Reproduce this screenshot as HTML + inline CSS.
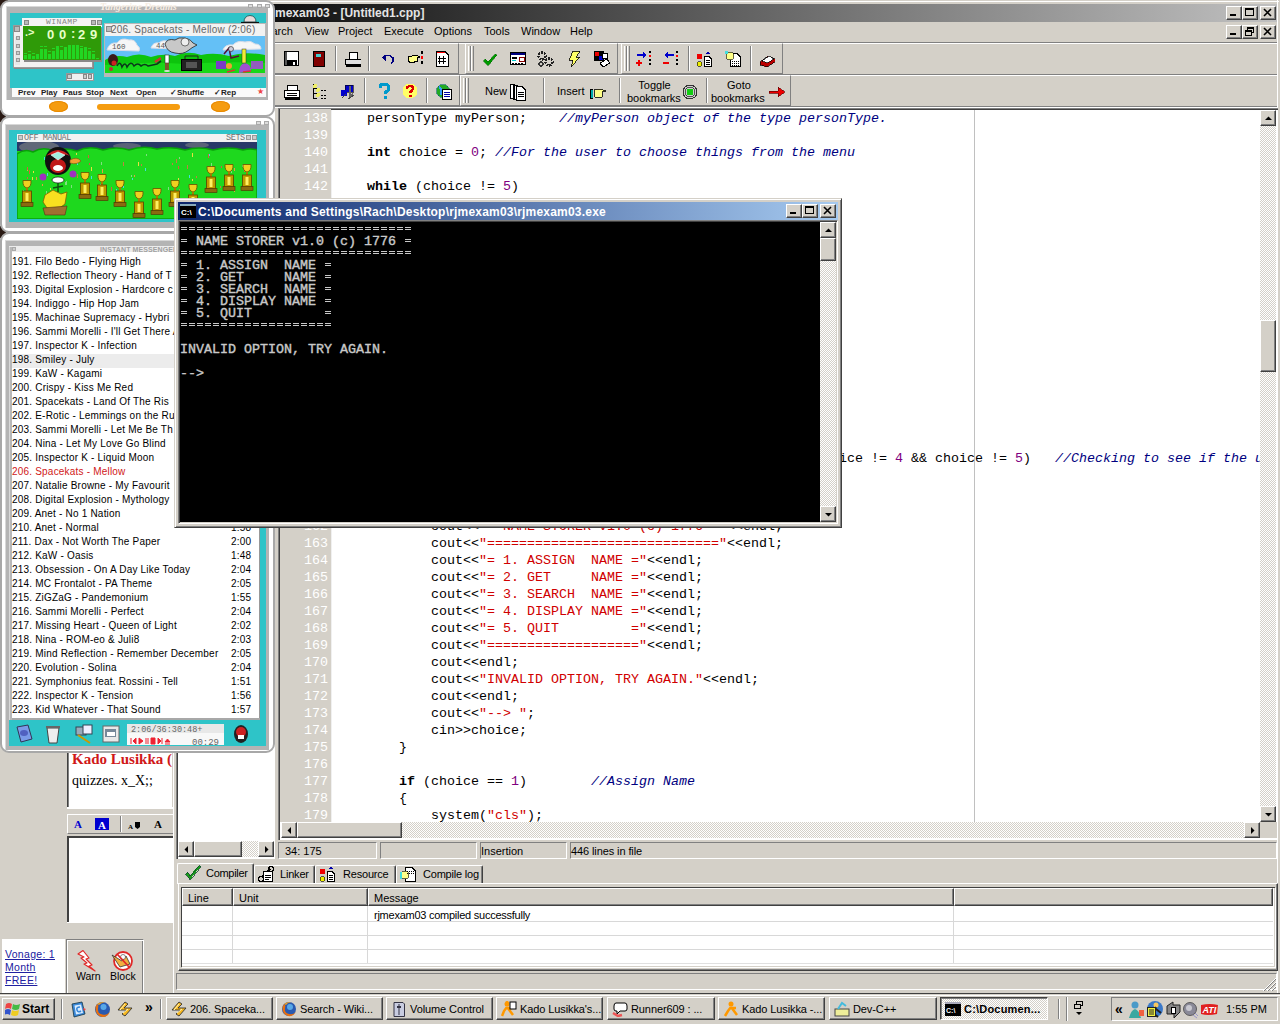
<!DOCTYPE html>
<html><head><meta charset="utf-8">
<style>
*{margin:0;padding:0;box-sizing:border-box}
html,body{width:1280px;height:1024px;overflow:hidden;background:#d4d0c8;font-family:"Liberation Sans",sans-serif;font-size:11px;color:#000;position:relative}
.a{position:absolute}
.t{white-space:pre;line-height:1}
.mono{font-family:"Liberation Mono",monospace}
svg{display:block}
</style></head><body>
<div class="a " style="left:0px;top:740px;width:176px;height:255px;background:#d4d0c8"></div>
<div class="a " style="left:67px;top:745px;width:106px;height:63px;background:#fff;border-left:1px solid #404040;border-top:1px solid #404040;box-shadow:inset 1px 0 0 #808080;"></div>
<div class="a " style="left:172px;top:745px;width:1px;height:63px;background:#d4d0c8"></div>
<div class="a t" style="left:72px;top:752px;font-family:'Liberation Serif',serif;font-weight:bold;font-size:15px;color:#d01818;width:100px;overflow:hidden;">Kado Lusikka (</div>
<div class="a t" style="left:72px;top:774px;font-family:'Liberation Serif',serif;font-size:14px;">quizzes. x_X;;</div>
<div class="a " style="left:67px;top:807px;width:106px;height:2px;background:#fff"></div>
<div class="a " style="left:67px;top:814px;width:106px;height:20px;background:#d4d0c8;border-top:1px solid #fff;border-left:1px solid #fff;border-bottom:1px solid #808080;"></div>
<div class="a " style="left:120px;top:816px;width:2px;height:16px;border-left:1px solid #808080;border-right:1px solid #fff;"></div>
<svg class="a" style="left:70px;top:816px" width="100" height="16" viewBox="0 0 100 16">
<text x="4" y="12" font-family="Liberation Serif" font-weight="bold" font-size="11" fill="#0000d0">A</text>
<rect x="25" y="2" width="14" height="12" fill="#0000d0"/><text x="28" y="12.5" font-family="Liberation Serif" font-weight="bold" font-size="11" fill="#fff">A</text>
<text x="58" y="13" font-family="Liberation Serif" font-weight="bold" font-size="7" fill="#000">A</text><path d="M65 6 H70 V11 L67.5 13 L65 11Z" fill="#000"/>
<text x="84" y="12" font-family="Liberation Serif" font-weight="bold" font-size="11" fill="#000">A</text>
</svg>
<div class="a " style="left:67px;top:836px;width:106px;height:87px;background:#fff;border-left:2px solid #404040;border-top:2px solid #404040;"></div>
<div class="a " style="left:67px;top:922px;width:106px;height:1px;background:#fff"></div>
<div class="a " style="left:2px;top:939px;width:63px;height:56px;background:#fff"></div>
<div class="a t" style="left:5px;top:949px;font-size:10.5px;color:#2020a0;text-decoration:underline;letter-spacing:0.3px;">Vonage: 1</div>
<div class="a t" style="left:5px;top:962px;font-size:10.5px;color:#2020a0;text-decoration:underline;letter-spacing:0.3px;">Month</div>
<div class="a t" style="left:5px;top:975px;font-size:10.5px;color:#2020a0;text-decoration:underline;letter-spacing:0.3px;">FREE!</div>
<div class="a " style="left:66px;top:939px;width:78px;height:56px;background:#d4d0c8;border-left:1px solid #808080;border-top:1px solid #808080;border-right:1px solid #fff;box-shadow:inset 1px 1px 0 #fff,inset -1px 0 0 #808080;"></div>
<svg class="a" style="left:76px;top:950px" width="62" height="22" viewBox="0 0 62 22">
<path d="M2 4 L7 0.5 L13 8 L10 9 L16 15 L13 16 L19 21 L8 14 L11 13 L5 8 L8 7Z" fill="#fff" stroke="#e02828" stroke-width="1.2" stroke-linejoin="round"/>
<circle cx="47" cy="11" r="9" fill="#fff" stroke="#e02828" stroke-width="1.8"/>
<path d="M36 5 L46 11 L50 6 L54 14 L44 17 Z" fill="#f0b040" stroke="#333" stroke-width="0.8"/><circle cx="47" cy="7" r="2.5" fill="#fff" stroke="#333" stroke-width="0.6"/>
<path d="M41 4 L54 18" stroke="#e02828" stroke-width="1.8"/>
</svg>
<div class="a t" style="left:76px;top:971px;font-size:10.5px;">Warn</div>
<div class="a t" style="left:110px;top:971px;font-size:10.5px;">Block</div>
<div class="a " style="left:173px;top:0px;width:1107px;height:994px;background:#d4d0c8;"></div>
<div class="a " style="left:174px;top:1px;width:1105px;height:1px;background:#fff"></div>
<div class="a " style="left:180px;top:4px;width:1097px;height:18px;background:linear-gradient(to right,#000 0px,#c0c0c0 1096px);"></div>
<div class="a t" style="left:215px;top:7px;font-weight:bold;color:#e4e4e4;font-size:12px;">Dev-C++ rjmexam03 - [Untitled1.cpp]</div>
<div class="a " style="left:1226px;top:6px;width:16px;height:14px;background:#d4d0c8;border-top:1px solid #fff;border-left:1px solid #fff;border-right:1px solid #404040;border-bottom:1px solid #404040;box-shadow:inset -1px -1px 0 #808080;"><svg class="a" style="left:0;top:0" width="14" height="12"><rect x="3" y="7" width="6" height="2" fill="#000"/></svg></div>
<div class="a " style="left:1242px;top:6px;width:16px;height:14px;background:#d4d0c8;border-top:1px solid #fff;border-left:1px solid #fff;border-right:1px solid #404040;border-bottom:1px solid #404040;box-shadow:inset -1px -1px 0 #808080;"><svg class="a" style="left:0;top:0" width="14" height="12"><rect x="2.5" y="1.5" width="8" height="7" fill="none" stroke="#000"/><rect x="2" y="1" width="9" height="2" fill="#000"/></svg></div>
<div class="a " style="left:1260px;top:6px;width:16px;height:14px;background:#d4d0c8;border-top:1px solid #fff;border-left:1px solid #fff;border-right:1px solid #404040;border-bottom:1px solid #404040;box-shadow:inset -1px -1px 0 #808080;"><svg class="a" style="left:0;top:0" width="14" height="12"><path d="M3 2 L10 9 M10 2 L3 9" stroke="#000" stroke-width="1.6"/></svg></div>
<div class="a t" style="left:190px;top:26px;font-size:11px;">File</div>
<div class="a t" style="left:222px;top:26px;font-size:11px;">Edit</div>
<div class="a t" style="left:258px;top:26px;font-size:11px;">Search</div>
<div class="a t" style="left:305px;top:26px;font-size:11px;">View</div>
<div class="a t" style="left:338px;top:26px;font-size:11px;">Project</div>
<div class="a t" style="left:384px;top:26px;font-size:11px;">Execute</div>
<div class="a t" style="left:434px;top:26px;font-size:11px;">Options</div>
<div class="a t" style="left:484px;top:26px;font-size:11px;">Tools</div>
<div class="a t" style="left:521px;top:26px;font-size:11px;">Window</div>
<div class="a t" style="left:570px;top:26px;font-size:11px;">Help</div>
<div class="a " style="left:1226px;top:25px;width:16px;height:14px;background:#d4d0c8;border-top:1px solid #fff;border-left:1px solid #fff;border-right:1px solid #404040;border-bottom:1px solid #404040;box-shadow:inset -1px -1px 0 #808080;"><svg class="a" style="left:0;top:0" width="14" height="12"><rect x="3" y="7" width="6" height="2" fill="#000"/></svg></div>
<div class="a " style="left:1242px;top:25px;width:16px;height:14px;background:#d4d0c8;border-top:1px solid #fff;border-left:1px solid #fff;border-right:1px solid #404040;border-bottom:1px solid #404040;box-shadow:inset -1px -1px 0 #808080;"><svg class="a" style="left:0;top:0" width="14" height="12"><rect x="4.5" y="1.5" width="6" height="5" fill="none" stroke="#000"/><rect x="4" y="1" width="7" height="2" fill="#000"/><rect x="2.5" y="4.5" width="6" height="5" fill="#d4d0c8" stroke="#000"/><rect x="2" y="4" width="7" height="2" fill="#000"/></svg></div>
<div class="a " style="left:1260px;top:25px;width:16px;height:14px;background:#d4d0c8;border-top:1px solid #fff;border-left:1px solid #fff;border-right:1px solid #404040;border-bottom:1px solid #404040;box-shadow:inset -1px -1px 0 #808080;"><svg class="a" style="left:0;top:0" width="14" height="12"><path d="M3 2 L10 9 M10 2 L3 9" stroke="#000" stroke-width="1.6"/></svg></div>
<div class="a " style="left:1277px;top:0px;width:1px;height:996px;background:#fff"></div>
<div class="a " style="left:176px;top:42px;width:1101px;height:1px;background:#808080"></div>
<div class="a " style="left:176px;top:43px;width:1101px;height:1px;background:#fff"></div>
<div class="a " style="left:176px;top:74px;width:1101px;height:1px;background:#808080"></div>
<div class="a " style="left:176px;top:75px;width:1101px;height:1px;background:#fff"></div>
<div class="a " style="left:176px;top:106px;width:1101px;height:1px;background:#808080"></div>
<div class="a " style="left:176px;top:107px;width:1101px;height:1px;background:#fff"></div>
<div class="a " style="left:180px;top:43px;width:279px;height:31px;border-left:1px solid #fff;border-top:1px solid #fff;border-right:1px solid #808080;border-bottom:1px solid #808080;"></div>
<div class="a " style="left:183px;top:46px;width:3px;height:25px;border-left:1px solid #fff;border-right:1px solid #808080;"></div>
<div class="a " style="left:186px;top:46px;width:3px;height:25px;border-left:1px solid #fff;border-right:1px solid #808080;"></div>
<div class="a " style="left:335px;top:46px;width:2px;height:25px;border-left:1px solid #808080;border-right:1px solid #fff;"></div>
<div class="a " style="left:368px;top:46px;width:2px;height:25px;border-left:1px solid #808080;border-right:1px solid #fff;"></div>
<svg class="a" style="left:284px;top:51px" width="16" height="16" viewBox="0 0 16 16" shape-rendering="crispEdges"><rect x="0.5" y="0.5" width="14" height="14" fill="#fff" stroke="#000"/><rect x="2" y="9" width="11" height="6" fill="#000"/><rect x="3" y="1" width="9" height="6" fill="#fff"/><rect x="9" y="11" width="2" height="3" fill="#fff"/><rect x="1" y="1" width="2" height="13" fill="#555"/></svg>
<svg class="a" style="left:313px;top:51px" width="16" height="16" viewBox="0 0 16 16" shape-rendering="crispEdges"><rect x="0" y="0" width="11" height="15" fill="#800000" stroke="#000"/><rect x="3" y="3" width="5" height="3" fill="#4cc"/></svg>
<svg class="a" style="left:345px;top:52px" width="16" height="16" viewBox="0 0 16 16" shape-rendering="crispEdges"><rect x="4" y="0.5" width="8" height="7" fill="#fff" stroke="#000"/><rect x="0.5" y="7.5" width="16" height="5" fill="#e0e0e0" stroke="#000"/><rect x="1" y="13" width="15" height="2" fill="#000"/></svg>
<svg class="a" style="left:380px;top:54px" width="16" height="12" viewBox="0 0 16 12" shape-rendering="crispEdges"><path d="M3 3 Q9 -1 13 4 Q14 8 11 9" fill="none" stroke="#000080" stroke-width="1.5"/><path d="M1 3 L6 8 L6 2Z" fill="#000080"/></svg>
<svg class="a" style="left:407px;top:51px" width="16" height="16" viewBox="0 0 16 16" shape-rendering="crispEdges"><path d="M1 6 L9 4 L13 6 L10 7 L11 10 L4 12 L1 10Z" fill="#ff8" stroke="#000"/><rect x="14" y="0" width="2" height="3" fill="#000"/><rect x="14" y="5" width="2" height="3" fill="#f00"/><rect x="14" y="10" width="2" height="3" fill="#000"/></svg>
<svg class="a" style="left:436px;top:51px" width="13" height="16" viewBox="0 0 13 16" shape-rendering="crispEdges"><path d="M0.5 0.5 L9 0.5 L12.5 4 L12.5 15.5 L0.5 15.5Z" fill="#fff" stroke="#000"/><path d="M1 1.5 L9 1.5" stroke="#f00"/><path d="M4 5 L3 13 M8 5 L7 13 M2 7.5 L10 7.5 M2 10.5 L10 10.5" stroke="#000"/></svg>
<div class="a " style="left:465px;top:43px;width:153px;height:31px;border-left:1px solid #fff;border-top:1px solid #fff;border-right:1px solid #808080;border-bottom:1px solid #808080;"></div>
<div class="a " style="left:468px;top:46px;width:3px;height:25px;border-left:1px solid #fff;border-right:1px solid #808080;"></div>
<div class="a " style="left:471px;top:46px;width:3px;height:25px;border-left:1px solid #fff;border-right:1px solid #808080;"></div>
<svg class="a" style="left:482px;top:53px" width="16" height="16" viewBox="0 0 16 16" shape-rendering="crispEdges"><path d="M1 8 L6 13 L15 2 L13 1 L6 9 L3 6Z" fill="#090" stroke="#060" stroke-width="0.5"/></svg>
<svg class="a" style="left:510px;top:52px" width="16" height="14" viewBox="0 0 16 14" shape-rendering="crispEdges"><rect x="0.5" y="0.5" width="15" height="12" fill="#fff" stroke="#000"/><rect x="1" y="1" width="14" height="2" fill="#000080"/><rect x="2" y="5" width="5" height="2" fill="#000"/><rect x="2" y="8" width="4" height="1" fill="#0cc"/><rect x="9" y="5" width="5" height="4" fill="none" stroke="#800"/><path d="M2 11 H14" stroke="#000" stroke-dasharray="2 1"/></svg>
<svg class="a" style="left:537px;top:51px" width="17" height="16" viewBox="0 0 17 16" shape-rendering="crispEdges"><circle cx="5" cy="5" r="3.5" fill="none" stroke="#222" stroke-width="2.2" stroke-dasharray="2 1"/><circle cx="12" cy="11" r="3.5" fill="none" stroke="#222" stroke-width="2.2" stroke-dasharray="2 1"/><circle cx="4" cy="13" r="2" fill="none" stroke="#333" stroke-width="1.5"/></svg>
<svg class="a" style="left:567px;top:51px" width="14" height="16" viewBox="0 0 14 16" shape-rendering="crispEdges"><path d="M6 0 L13 0 L9 6 L13 6 L4 16 L6 9 L2 9Z" fill="#ff6" stroke="#000" stroke-width="0.8"/></svg>
<svg class="a" style="left:594px;top:51px" width="16" height="16" viewBox="0 0 16 16" shape-rendering="crispEdges"><rect x="0" y="0" width="10" height="10" fill="#000"/><rect x="1" y="1" width="4" height="4" fill="#e00"/><rect x="5" y="5" width="4" height="4" fill="#00c"/><circle cx="11" cy="5" r="3" fill="#fff" stroke="#000"/><path d="M6 12 L13 8 L16 12 L9 16Z" fill="#fff" stroke="#000"/></svg>
<div class="a " style="left:621px;top:43px;width:162px;height:31px;border-left:1px solid #fff;border-top:1px solid #fff;border-right:1px solid #808080;border-bottom:1px solid #808080;"></div>
<div class="a " style="left:624px;top:46px;width:3px;height:25px;border-left:1px solid #fff;border-right:1px solid #808080;"></div>
<div class="a " style="left:627px;top:46px;width:3px;height:25px;border-left:1px solid #fff;border-right:1px solid #808080;"></div>
<svg class="a" style="left:636px;top:51px" width="16" height="16" viewBox="0 0 16 16" shape-rendering="crispEdges"><path d="M1 4 H9" stroke="#00c" stroke-width="2"/><path d="M7 1 L11 4 L7 7Z" fill="#00c"/><path d="M3 9 V15 M0 12 H6" stroke="#e00" stroke-width="2"/><rect x="13" y="0" width="2" height="2" fill="#000"/><rect x="13" y="4" width="2" height="2" fill="#f00"/><rect x="13" y="8" width="2" height="2" fill="#000"/><rect x="13" y="12" width="2" height="2" fill="#000"/></svg>
<svg class="a" style="left:663px;top:51px" width="16" height="16" viewBox="0 0 16 16" shape-rendering="crispEdges"><path d="M3 4 H11" stroke="#00c" stroke-width="2"/><path d="M5 1 L1 4 L5 7Z" fill="#00c"/><path d="M0 12 H6" stroke="#e00" stroke-width="2"/><rect x="13" y="0" width="2" height="2" fill="#000"/><rect x="13" y="4" width="2" height="2" fill="#f00"/><rect x="13" y="8" width="2" height="2" fill="#000"/><rect x="13" y="12" width="2" height="2" fill="#000"/></svg>
<div class="a " style="left:688px;top:46px;width:2px;height:25px;border-left:1px solid #808080;border-right:1px solid #fff;"></div>
<svg class="a" style="left:697px;top:51px" width="16" height="16" viewBox="0 0 16 16" shape-rendering="crispEdges"><rect x="0" y="3" width="5" height="5" fill="#e00"/><circle cx="2.5" cy="13" r="2.5" fill="#ee0" stroke="#000" stroke-width="0.6"/><path d="M7.5 5.5 H12 L14.5 8 V15.5 H7.5Z" fill="#fff" stroke="#000"/><path d="M9 3 L11 0 L13 3Z" fill="#00a"/><path d="M9 9 H13 M9 11 H13 M9 13 H13" stroke="#000"/></svg>
<svg class="a" style="left:725px;top:51px" width="16" height="16" viewBox="0 0 16 16" shape-rendering="crispEdges"><path d="M5.5 2.5 H12 L15.5 6 V15.5 H5.5Z" fill="#fff" stroke="#000"/><circle cx="5" cy="5" r="4" fill="#ff8" stroke="#000" stroke-width="0.6"/><rect x="0" y="0" width="3" height="3" fill="#4dd"/><path d="M7 10 H14 M7 12 H14 M7 14 H14" stroke="#000" stroke-dasharray="1 1"/></svg>
<div class="a " style="left:750px;top:46px;width:2px;height:25px;border-left:1px solid #808080;border-right:1px solid #fff;"></div>
<svg class="a" style="left:759px;top:53px" width="16" height="14" viewBox="0 0 16 14" shape-rendering="crispEdges"><path d="M1 9 L9 3 L16 6 L16 9 L8 14 L1 12Z" fill="#b00" stroke="#000" stroke-width="0.7"/><path d="M3 8 L10 3 L15 6 L8 10Z" fill="#fff" stroke="#000" stroke-width="0.7"/></svg>
<div class="a " style="left:180px;top:75px;width:280px;height:31px;border-left:1px solid #fff;border-top:1px solid #fff;border-right:1px solid #808080;border-bottom:1px solid #808080;"></div>
<div class="a " style="left:183px;top:78px;width:3px;height:25px;border-left:1px solid #fff;border-right:1px solid #808080;"></div>
<div class="a " style="left:186px;top:78px;width:3px;height:25px;border-left:1px solid #fff;border-right:1px solid #808080;"></div>
<div class="a " style="left:364px;top:78px;width:2px;height:25px;border-left:1px solid #808080;border-right:1px solid #fff;"></div>
<div class="a " style="left:426px;top:78px;width:2px;height:25px;border-left:1px solid #808080;border-right:1px solid #fff;"></div>
<svg class="a" style="left:284px;top:84px" width="16" height="16" viewBox="0 0 16 16" shape-rendering="crispEdges"><rect x="3" y="1.5" width="10" height="5" fill="#fff" stroke="#000"/><path d="M0.5 6.5 H15.5 V13.5 H0.5Z" fill="#fff" stroke="#000"/><path d="M3 9 H13 M3 11 H13" stroke="#000"/><rect x="1" y="14" width="15" height="2" fill="#000"/></svg>
<svg class="a" style="left:312px;top:84px" width="16" height="16" viewBox="0 0 16 16" shape-rendering="crispEdges"><path d="M1.5 0 V15 M1.5 4 H5 M1.5 9 H5 M1.5 14 H5" stroke="#000"/><circle cx="3" cy="2" r="2" fill="#ee6"/><circle cx="6" cy="6" r="2" fill="#ee6"/><circle cx="6" cy="11" r="2" fill="#ee6"/><path d="M9 6 H15 M9 11 H15 M9 14 H15" stroke="#000" stroke-dasharray="2 1"/></svg>
<svg class="a" style="left:340px;top:84px" width="16" height="16" viewBox="0 0 16 16" shape-rendering="crispEdges"><rect x="5" y="1" width="8" height="7" fill="#00c" stroke="#000" stroke-width="0.6"/><rect x="1" y="6" width="6" height="6" fill="#00c"/><path d="M10 2 V12 L13 10" stroke="#666" stroke-width="2" fill="none"/><path d="M2 14 L6 10 M8 15 L14 11" stroke="#444"/></svg>
<svg class="a" style="left:378px;top:83px" width="13" height="17" viewBox="0 0 13 17" shape-rendering="crispEdges"><path d="M2 5 Q2 1 6 1 Q11 1 11 5 Q11 8 7 9 L7 11" fill="none" stroke="#09c" stroke-width="3"/><rect x="5.5" y="13" width="3" height="3" fill="#09c"/></svg>
<svg class="a" style="left:402px;top:83px" width="16" height="16" viewBox="0 0 16 16" shape-rendering="crispEdges"><circle cx="8" cy="8" r="7.5" fill="#ff6"/><path d="M5 5.5 Q5 3 8 3 Q11 3 11 5.5 Q11 7.5 8.5 8.5 L8.5 10" fill="none" stroke="#d00" stroke-width="2.2"/><rect x="7" y="11.5" width="3" height="2.5" fill="#d00"/></svg>
<svg class="a" style="left:436px;top:84px" width="16" height="16" viewBox="0 0 16 16" shape-rendering="crispEdges"><circle cx="7" cy="7" r="6.5" fill="#2a2" stroke="#066" stroke-width="0.6"/><path d="M3 3 Q7 6 5 11" stroke="#39f" stroke-width="2.5" fill="none"/><rect x="6.5" y="5.5" width="9" height="10" fill="#fff" stroke="#000"/><path d="M8 8 H14 M8 10 H14 M8 12 H14" stroke="#00a"/></svg>
<div class="a " style="left:460px;top:75px;width:331px;height:31px;border-left:1px solid #fff;border-top:1px solid #fff;border-right:1px solid #808080;border-bottom:1px solid #808080;"></div>
<div class="a " style="left:463px;top:78px;width:3px;height:25px;border-left:1px solid #fff;border-right:1px solid #808080;"></div>
<div class="a " style="left:466px;top:78px;width:3px;height:25px;border-left:1px solid #fff;border-right:1px solid #808080;"></div>
<div class="a t" style="left:485px;top:86px;font-size:11px;">New</div>
<svg class="a" style="left:510px;top:84px" width="16" height="17" viewBox="0 0 16 17" shape-rendering="crispEdges"><path d="M0.5 0.5 H4 V14.5 H0.5Z M3.5 1.5 H7 V15.5 H3.5Z" fill="#fff" stroke="#000"/><path d="M6.5 2.5 H12 L15.5 6 V16 H6.5Z" fill="#fff" stroke="#000"/><path d="M8 8 H14 M8 10 H14 M8 12 H14" stroke="#000"/></svg>
<div class="a " style="left:543px;top:78px;width:2px;height:25px;border-left:1px solid #808080;border-right:1px solid #fff;"></div>
<div class="a t" style="left:557px;top:86px;font-size:11px;">Insert</div>
<svg class="a" style="left:590px;top:85px" width="16" height="16" viewBox="0 0 16 16" shape-rendering="crispEdges"><rect x="0" y="4" width="3" height="10" fill="#000"/><rect x="1" y="5" width="2" height="8" fill="#0aa"/><path d="M4 5 L10 4 L16 6 L12 7 L12 12 L5 12Z" fill="#ff8" stroke="#000" stroke-width="0.8"/></svg>
<div class="a " style="left:619px;top:78px;width:2px;height:25px;border-left:1px solid #808080;border-right:1px solid #fff;"></div>
<div class="a t" style="left:628px;top:80px;font-size:11px;width:53px;text-align:center;">Toggle</div>
<div class="a t" style="left:627px;top:93px;font-size:11px;">bookmarks</div>
<svg class="a" style="left:682px;top:84px" width="16" height="16" viewBox="0 0 16 16" shape-rendering="crispEdges"><circle cx="8" cy="8" r="7" fill="#ccc" stroke="#333" stroke-width="1"/><circle cx="8" cy="8" r="5" fill="none" stroke="#333" stroke-width="0.8"/><circle cx="8" cy="8" r="3.5" fill="#1c1"/></svg>
<div class="a " style="left:706px;top:78px;width:2px;height:25px;border-left:1px solid #808080;border-right:1px solid #fff;"></div>
<div class="a t" style="left:712px;top:80px;font-size:11px;width:54px;text-align:center;">Goto</div>
<div class="a t" style="left:711px;top:93px;font-size:11px;">bookmarks</div>
<svg class="a" style="left:769px;top:85px" width="16" height="14" viewBox="0 0 16 14" shape-rendering="crispEdges"><path d="M0 6 H9 V2 L16 7 L9 12 V8 H0Z" fill="#e00" stroke="#600" stroke-width="0.7"/></svg>
<div class="a " style="left:176px;top:108px;width:99px;height:751px;background:#fff;border-left:1px solid #808080;border-top:1px solid #808080;box-shadow:inset 1px 1px 0 #404040;"></div>
<div class="a " style="left:274px;top:108px;width:1px;height:751px;background:#fff"></div>
<div class="a " style="left:178px;top:841px;width:16px;height:16px;background:#d4d0c8;border-top:1px solid #fff;border-left:1px solid #fff;border-right:1px solid #404040;border-bottom:1px solid #404040;box-shadow:inset -1px -1px 0 #808080;"><svg class="a" style="left:0;top:0" width="16" height="16"><path d="M9 4 L9 11 L5.5 7.5 Z" fill="#000"/></svg></div>
<div class="a " style="left:194px;top:841px;width:48px;height:16px;background:#d4d0c8;border-top:1px solid #fff;border-left:1px solid #fff;border-right:1px solid #404040;border-bottom:1px solid #404040;box-shadow:inset -1px -1px 0 #808080;"></div>
<div class="a " style="left:242px;top:841px;width:16px;height:16px;background-color:#ece9e2;background-image:repeating-conic-gradient(#d4d0c8 0 25%,#fff 0 50%);background-size:2px 2px;"></div>
<div class="a " style="left:258px;top:841px;width:16px;height:16px;background:#d4d0c8;border-top:1px solid #fff;border-left:1px solid #fff;border-right:1px solid #404040;border-bottom:1px solid #404040;box-shadow:inset -1px -1px 0 #808080;"><svg class="a" style="left:0;top:0" width="16" height="16"><path d="M6 4 L6 11 L9.5 7.5 Z" fill="#000"/></svg></div>
<div class="a " style="left:278px;top:108px;width:1000px;height:732px;background:#fff;border-left:1px solid #808080;border-top:1px solid #808080;box-shadow:inset 1px 1px 0 #404040;"></div>
<div class="a " style="left:280px;top:109px;width:51px;height:713px;background:#d4d0c8"></div>
<div class="a " style="left:331px;top:110px;width:1px;height:712px;background:#f0f0f0"></div>
<div class="a " style="left:974px;top:110px;width:1px;height:712px;background:#c0c0c0"></div>
<div class="a " style="left:1260px;top:110px;width:16px;height:712px;background-color:#ece9e2;background-image:repeating-conic-gradient(#d4d0c8 0 25%,#fff 0 50%);background-size:2px 2px;"></div>
<div class="a " style="left:1260px;top:110px;width:16px;height:16px;background:#d4d0c8;border-top:1px solid #fff;border-left:1px solid #fff;border-right:1px solid #404040;border-bottom:1px solid #404040;box-shadow:inset -1px -1px 0 #808080;"><svg class="a" style="left:0;top:0" width="16" height="16"><path d="M4 9 L11 9 L7.5 5.5 Z" fill="#000"/></svg></div>
<div class="a " style="left:1260px;top:806px;width:16px;height:16px;background:#d4d0c8;border-top:1px solid #fff;border-left:1px solid #fff;border-right:1px solid #404040;border-bottom:1px solid #404040;box-shadow:inset -1px -1px 0 #808080;"><svg class="a" style="left:0;top:0" width="16" height="16"><path d="M4 6 L11 6 L7.5 9.5 Z" fill="#000"/></svg></div>
<div class="a " style="left:1260px;top:320px;width:16px;height:52px;background:#d4d0c8;border-top:1px solid #fff;border-left:1px solid #fff;border-right:1px solid #404040;border-bottom:1px solid #404040;box-shadow:inset -1px -1px 0 #808080;"></div>
<div class="a " style="left:281px;top:822px;width:979px;height:16px;background-color:#ece9e2;background-image:repeating-conic-gradient(#d4d0c8 0 25%,#fff 0 50%);background-size:2px 2px;"></div>
<div class="a " style="left:281px;top:822px;width:16px;height:16px;background:#d4d0c8;border-top:1px solid #fff;border-left:1px solid #fff;border-right:1px solid #404040;border-bottom:1px solid #404040;box-shadow:inset -1px -1px 0 #808080;"><svg class="a" style="left:0;top:0" width="16" height="16"><path d="M9 4 L9 11 L5.5 7.5 Z" fill="#000"/></svg></div>
<div class="a " style="left:1244px;top:822px;width:16px;height:16px;background:#d4d0c8;border-top:1px solid #fff;border-left:1px solid #fff;border-right:1px solid #404040;border-bottom:1px solid #404040;box-shadow:inset -1px -1px 0 #808080;"><svg class="a" style="left:0;top:0" width="16" height="16"><path d="M6 4 L6 11 L9.5 7.5 Z" fill="#000"/></svg></div>
<div class="a " style="left:297px;top:822px;width:105px;height:16px;background:#d4d0c8;border-top:1px solid #fff;border-left:1px solid #fff;border-right:1px solid #404040;border-bottom:1px solid #404040;box-shadow:inset -1px -1px 0 #808080;"></div>
<div class="a " style="left:1260px;top:822px;width:17px;height:16px;background:#d4d0c8"></div>
<div class="a t" style="left:281px;top:112px;font-family:'Liberation Mono',monospace;font-size:13.33px;color:#fff;width:47px;text-align:right;">138</div>
<div class="a t mono" style="left:335px;top:112px;font-size:13.33px;width:925px;overflow:hidden">    personType myPerson;    <span style="color:#000080;font-style:italic">//myPerson object of the type personType.</span></div>
<div class="a t" style="left:281px;top:129px;font-family:'Liberation Mono',monospace;font-size:13.33px;color:#fff;width:47px;text-align:right;">139</div>
<div class="a t" style="left:281px;top:146px;font-family:'Liberation Mono',monospace;font-size:13.33px;color:#fff;width:47px;text-align:right;">140</div>
<div class="a t mono" style="left:335px;top:146px;font-size:13.33px;width:925px;overflow:hidden">    <b>int</b> choice = <span style="color:#800080">0</span>; <span style="color:#000080;font-style:italic">//For the user to choose things from the menu</span></div>
<div class="a t" style="left:281px;top:163px;font-family:'Liberation Mono',monospace;font-size:13.33px;color:#fff;width:47px;text-align:right;">141</div>
<div class="a t" style="left:281px;top:180px;font-family:'Liberation Mono',monospace;font-size:13.33px;color:#fff;width:47px;text-align:right;">142</div>
<div class="a t mono" style="left:335px;top:180px;font-size:13.33px;width:925px;overflow:hidden">    <b>while</b> (choice != <span style="color:#800080">5</span>)</div>
<div class="a t" style="left:281px;top:197px;font-family:'Liberation Mono',monospace;font-size:13.33px;color:#fff;width:47px;text-align:right;">143</div>
<div class="a t" style="left:281px;top:214px;font-family:'Liberation Mono',monospace;font-size:13.33px;color:#fff;width:47px;text-align:right;">144</div>
<div class="a t" style="left:281px;top:231px;font-family:'Liberation Mono',monospace;font-size:13.33px;color:#fff;width:47px;text-align:right;">145</div>
<div class="a t" style="left:281px;top:248px;font-family:'Liberation Mono',monospace;font-size:13.33px;color:#fff;width:47px;text-align:right;">146</div>
<div class="a t" style="left:281px;top:265px;font-family:'Liberation Mono',monospace;font-size:13.33px;color:#fff;width:47px;text-align:right;">147</div>
<div class="a t" style="left:281px;top:282px;font-family:'Liberation Mono',monospace;font-size:13.33px;color:#fff;width:47px;text-align:right;">148</div>
<div class="a t" style="left:281px;top:299px;font-family:'Liberation Mono',monospace;font-size:13.33px;color:#fff;width:47px;text-align:right;">149</div>
<div class="a t" style="left:281px;top:316px;font-family:'Liberation Mono',monospace;font-size:13.33px;color:#fff;width:47px;text-align:right;">150</div>
<div class="a t" style="left:281px;top:333px;font-family:'Liberation Mono',monospace;font-size:13.33px;color:#fff;width:47px;text-align:right;">151</div>
<div class="a t" style="left:281px;top:350px;font-family:'Liberation Mono',monospace;font-size:13.33px;color:#fff;width:47px;text-align:right;">152</div>
<div class="a t" style="left:281px;top:367px;font-family:'Liberation Mono',monospace;font-size:13.33px;color:#fff;width:47px;text-align:right;">153</div>
<div class="a t" style="left:281px;top:384px;font-family:'Liberation Mono',monospace;font-size:13.33px;color:#fff;width:47px;text-align:right;">154</div>
<div class="a t" style="left:281px;top:401px;font-family:'Liberation Mono',monospace;font-size:13.33px;color:#fff;width:47px;text-align:right;">155</div>
<div class="a t" style="left:281px;top:418px;font-family:'Liberation Mono',monospace;font-size:13.33px;color:#fff;width:47px;text-align:right;">156</div>
<div class="a t" style="left:281px;top:435px;font-family:'Liberation Mono',monospace;font-size:13.33px;color:#fff;width:47px;text-align:right;">157</div>
<div class="a t" style="left:281px;top:452px;font-family:'Liberation Mono',monospace;font-size:13.33px;color:#fff;width:47px;text-align:right;">158</div>
<div class="a t mono" style="left:335px;top:452px;font-size:13.33px;width:925px;overflow:hidden">        <b>while</b> (choice != <span style="color:#800080">1</span> &amp;&amp; choice != <span style="color:#800080">2</span> &amp;&amp; choice != <span style="color:#800080">3</span> &amp;&amp; choice != <span style="color:#800080">4</span> &amp;&amp; choice != <span style="color:#800080">5</span>)   <span style="color:#000080;font-style:italic">//Checking to see if the user entered</span></div>
<div class="a t" style="left:281px;top:469px;font-family:'Liberation Mono',monospace;font-size:13.33px;color:#fff;width:47px;text-align:right;">159</div>
<div class="a t" style="left:281px;top:486px;font-family:'Liberation Mono',monospace;font-size:13.33px;color:#fff;width:47px;text-align:right;">160</div>
<div class="a t" style="left:281px;top:503px;font-family:'Liberation Mono',monospace;font-size:13.33px;color:#fff;width:47px;text-align:right;">161</div>
<div class="a t" style="left:281px;top:520px;font-family:'Liberation Mono',monospace;font-size:13.33px;color:#fff;width:47px;text-align:right;">162</div>
<div class="a t mono" style="left:335px;top:520px;font-size:13.33px;width:925px;overflow:hidden">            cout&lt;&lt;<span style="color:#d00000">&quot;= NAME STORER v1.0 (c) 1776 =&quot;</span>&lt;&lt;endl;</div>
<div class="a t" style="left:281px;top:537px;font-family:'Liberation Mono',monospace;font-size:13.33px;color:#fff;width:47px;text-align:right;">163</div>
<div class="a t mono" style="left:335px;top:537px;font-size:13.33px;width:925px;overflow:hidden">            cout&lt;&lt;<span style="color:#d00000">&quot;=============================&quot;</span>&lt;&lt;endl;</div>
<div class="a t" style="left:281px;top:554px;font-family:'Liberation Mono',monospace;font-size:13.33px;color:#fff;width:47px;text-align:right;">164</div>
<div class="a t mono" style="left:335px;top:554px;font-size:13.33px;width:925px;overflow:hidden">            cout&lt;&lt;<span style="color:#d00000">&quot;= 1. ASSIGN  NAME =&quot;</span>&lt;&lt;endl;</div>
<div class="a t" style="left:281px;top:571px;font-family:'Liberation Mono',monospace;font-size:13.33px;color:#fff;width:47px;text-align:right;">165</div>
<div class="a t mono" style="left:335px;top:571px;font-size:13.33px;width:925px;overflow:hidden">            cout&lt;&lt;<span style="color:#d00000">&quot;= 2. GET     NAME =&quot;</span>&lt;&lt;endl;</div>
<div class="a t" style="left:281px;top:588px;font-family:'Liberation Mono',monospace;font-size:13.33px;color:#fff;width:47px;text-align:right;">166</div>
<div class="a t mono" style="left:335px;top:588px;font-size:13.33px;width:925px;overflow:hidden">            cout&lt;&lt;<span style="color:#d00000">&quot;= 3. SEARCH  NAME =&quot;</span>&lt;&lt;endl;</div>
<div class="a t" style="left:281px;top:605px;font-family:'Liberation Mono',monospace;font-size:13.33px;color:#fff;width:47px;text-align:right;">167</div>
<div class="a t mono" style="left:335px;top:605px;font-size:13.33px;width:925px;overflow:hidden">            cout&lt;&lt;<span style="color:#d00000">&quot;= 4. DISPLAY NAME =&quot;</span>&lt;&lt;endl;</div>
<div class="a t" style="left:281px;top:622px;font-family:'Liberation Mono',monospace;font-size:13.33px;color:#fff;width:47px;text-align:right;">168</div>
<div class="a t mono" style="left:335px;top:622px;font-size:13.33px;width:925px;overflow:hidden">            cout&lt;&lt;<span style="color:#d00000">&quot;= 5. QUIT         =&quot;</span>&lt;&lt;endl;</div>
<div class="a t" style="left:281px;top:639px;font-family:'Liberation Mono',monospace;font-size:13.33px;color:#fff;width:47px;text-align:right;">169</div>
<div class="a t mono" style="left:335px;top:639px;font-size:13.33px;width:925px;overflow:hidden">            cout&lt;&lt;<span style="color:#d00000">&quot;===================&quot;</span>&lt;&lt;endl;</div>
<div class="a t" style="left:281px;top:656px;font-family:'Liberation Mono',monospace;font-size:13.33px;color:#fff;width:47px;text-align:right;">170</div>
<div class="a t mono" style="left:335px;top:656px;font-size:13.33px;width:925px;overflow:hidden">            cout&lt;&lt;endl;</div>
<div class="a t" style="left:281px;top:673px;font-family:'Liberation Mono',monospace;font-size:13.33px;color:#fff;width:47px;text-align:right;">171</div>
<div class="a t mono" style="left:335px;top:673px;font-size:13.33px;width:925px;overflow:hidden">            cout&lt;&lt;<span style="color:#d00000">&quot;INVALID OPTION, TRY AGAIN.&quot;</span>&lt;&lt;endl;</div>
<div class="a t" style="left:281px;top:690px;font-family:'Liberation Mono',monospace;font-size:13.33px;color:#fff;width:47px;text-align:right;">172</div>
<div class="a t mono" style="left:335px;top:690px;font-size:13.33px;width:925px;overflow:hidden">            cout&lt;&lt;endl;</div>
<div class="a t" style="left:281px;top:707px;font-family:'Liberation Mono',monospace;font-size:13.33px;color:#fff;width:47px;text-align:right;">173</div>
<div class="a t mono" style="left:335px;top:707px;font-size:13.33px;width:925px;overflow:hidden">            cout&lt;&lt;<span style="color:#d00000">&quot;--&gt; &quot;</span>;</div>
<div class="a t" style="left:281px;top:724px;font-family:'Liberation Mono',monospace;font-size:13.33px;color:#fff;width:47px;text-align:right;">174</div>
<div class="a t mono" style="left:335px;top:724px;font-size:13.33px;width:925px;overflow:hidden">            cin&gt;&gt;choice;</div>
<div class="a t" style="left:281px;top:741px;font-family:'Liberation Mono',monospace;font-size:13.33px;color:#fff;width:47px;text-align:right;">175</div>
<div class="a t mono" style="left:335px;top:741px;font-size:13.33px;width:925px;overflow:hidden">        }</div>
<div class="a t" style="left:281px;top:758px;font-family:'Liberation Mono',monospace;font-size:13.33px;color:#fff;width:47px;text-align:right;">176</div>
<div class="a t" style="left:281px;top:775px;font-family:'Liberation Mono',monospace;font-size:13.33px;color:#fff;width:47px;text-align:right;">177</div>
<div class="a t mono" style="left:335px;top:775px;font-size:13.33px;width:925px;overflow:hidden">        <b>if</b> (choice == <span style="color:#800080">1</span>)        <span style="color:#000080;font-style:italic">//Assign Name</span></div>
<div class="a t" style="left:281px;top:792px;font-family:'Liberation Mono',monospace;font-size:13.33px;color:#fff;width:47px;text-align:right;">178</div>
<div class="a t mono" style="left:335px;top:792px;font-size:13.33px;width:925px;overflow:hidden">        {</div>
<div class="a t" style="left:281px;top:809px;font-family:'Liberation Mono',monospace;font-size:13.33px;color:#fff;width:47px;text-align:right;">179</div>
<div class="a t mono" style="left:335px;top:809px;font-size:13.33px;width:925px;overflow:hidden">            system(<span style="color:#d00000">&quot;cls&quot;</span>);</div>
<div class="a " style="left:278px;top:842px;width:99px;height:17px;background:#d4d0c8;border-top:1px solid #808080;border-left:1px solid #808080;border-right:1px solid #fff;border-bottom:1px solid #fff;"></div>
<div class="a " style="left:380px;top:842px;width:97px;height:17px;background:#d4d0c8;border-top:1px solid #808080;border-left:1px solid #808080;border-right:1px solid #fff;border-bottom:1px solid #fff;"></div>
<div class="a " style="left:480px;top:842px;width:87px;height:17px;background:#d4d0c8;border-top:1px solid #808080;border-left:1px solid #808080;border-right:1px solid #fff;border-bottom:1px solid #fff;"></div>
<div class="a " style="left:570px;top:842px;width:707px;height:17px;background:#d4d0c8;border-top:1px solid #808080;border-left:1px solid #808080;border-right:1px solid #fff;border-bottom:1px solid #fff;"></div>
<div class="a t" style="left:285px;top:846px;font-size:11px">34: 175</div>
<div class="a t" style="left:481px;top:846px;font-size:11px">Insertion</div>
<div class="a t" style="left:571px;top:846px;font-size:11px;letter-spacing:-0.1px">446 lines in file</div>
<div class="a " style="left:254px;top:865px;width:61px;height:18px;background:#d4d0c8;border-left:1px solid #fff;border-top:1px solid #fff;border-right:1px solid #404040;box-shadow:inset -1px 0 0 #808080;border-radius:2px 2px 0 0;"></div>
<div class="a " style="left:315px;top:865px;width:81px;height:18px;background:#d4d0c8;border-left:1px solid #fff;border-top:1px solid #fff;border-right:1px solid #404040;box-shadow:inset -1px 0 0 #808080;border-radius:2px 2px 0 0;"></div>
<div class="a " style="left:396px;top:865px;width:87px;height:18px;background:#d4d0c8;border-left:1px solid #fff;border-top:1px solid #fff;border-right:1px solid #404040;box-shadow:inset -1px 0 0 #808080;border-radius:2px 2px 0 0;"></div>
<div class="a " style="left:177px;top:863px;width:77px;height:21px;background:#d4d0c8;border-left:1px solid #fff;border-top:1px solid #fff;border-right:1px solid #404040;box-shadow:inset -1px 0 0 #808080;border-radius:2px 2px 0 0;"></div>
<svg class="a" style="left:185px;top:865px" width="16" height="16" viewBox="0 0 16 16" shape-rendering="crispEdges"><path d="M0.5 9 L5 14.5 L15.5 1.5 L13.5 0.5 L5 10.5 L2.5 7Z" fill="#1a9a1a" stroke="#0a4a2a" stroke-width="0.8"/></svg>
<div class="a t" style="left:206px;top:868px;font-size:11px;letter-spacing:-0.3px">Compiler</div>
<svg class="a" style="left:258px;top:866px" width="16" height="16" viewBox="0 0 16 16" shape-rendering="crispEdges"><circle cx="3" cy="13" r="2.5" fill="none" stroke="#000" stroke-width="1.4"/><path d="M4 11 L12 3" stroke="#000" stroke-width="2"/><circle cx="13" cy="3" r="2.5" fill="none" stroke="#000" stroke-width="1.4"/><rect x="5.5" y="5.5" width="9" height="10" fill="#fff" stroke="#000" stroke-width="1.2"/><path d="M7 9 H13 M7 11 H13 M7 13 H11" stroke="#000"/></svg>
<div class="a t" style="left:280px;top:869px;font-size:11px;letter-spacing:-0.2px">Linker</div>
<svg class="a" style="left:320px;top:866px" width="16" height="16" viewBox="0 0 16 16" shape-rendering="crispEdges"><rect x="0" y="3" width="5" height="5" fill="#e00"/><circle cx="2.5" cy="13" r="2.5" fill="#ee0" stroke="#000" stroke-width="0.6"/><path d="M7.5 5.5 H12 L14.5 8 V15.5 H7.5Z" fill="#fff" stroke="#000"/><path d="M9 3 L11 0 L13 3Z" fill="#00a"/><path d="M9 9 H13 M9 11 H13 M9 13 H13" stroke="#000"/></svg>
<div class="a t" style="left:343px;top:869px;font-size:11px;letter-spacing:-0.2px">Resource</div>
<svg class="a" style="left:400px;top:866px" width="16" height="16" viewBox="0 0 16 16" shape-rendering="crispEdges"><path d="M5.5 1.5 H12 L15.5 5 V15.5 H5.5Z" fill="#fff" stroke="#000"/><circle cx="5" cy="9" r="4" fill="#ff8" stroke="#000" stroke-width="0.6"/><rect x="0" y="6" width="2" height="7" fill="#4dd"/><path d="M7 5 H14 M7 7 H14" stroke="#000" stroke-dasharray="1 1"/></svg>
<div class="a t" style="left:423px;top:869px;font-size:11px;letter-spacing:-0.2px">Compile log</div>
<div class="a " style="left:178px;top:883px;width:1100px;height:88px;border-top:1px solid #fff;border-left:1px solid #fff;border-right:1px solid #404040;border-bottom:1px solid #404040;box-shadow:inset -1px -1px 0 #808080;"></div>
<div class="a " style="left:181px;top:887px;width:1094px;height:80px;background:#fff;border-top:1px solid #404040;border-left:1px solid #404040;box-shadow:1px 1px 0 #fff,inset -1px -1px 0 #d4d0c8;"></div>
<div class="a " style="left:182px;top:888px;width:51px;height:18px;background:#d4d0c8;border-left:1px solid #fff;border-top:1px solid #fff;border-right:1px solid #404040;border-bottom:1px solid #404040;box-shadow:inset -1px -1px 0 #808080;"></div>
<div class="a t" style="left:188px;top:893px;font-size:11px">Line</div>
<div class="a " style="left:233px;top:888px;width:135px;height:18px;background:#d4d0c8;border-left:1px solid #fff;border-top:1px solid #fff;border-right:1px solid #404040;border-bottom:1px solid #404040;box-shadow:inset -1px -1px 0 #808080;"></div>
<div class="a t" style="left:239px;top:893px;font-size:11px">Unit</div>
<div class="a " style="left:368px;top:888px;width:586px;height:18px;background:#d4d0c8;border-left:1px solid #fff;border-top:1px solid #fff;border-right:1px solid #404040;border-bottom:1px solid #404040;box-shadow:inset -1px -1px 0 #808080;"></div>
<div class="a t" style="left:374px;top:893px;font-size:11px">Message</div>
<div class="a " style="left:954px;top:888px;width:319px;height:18px;background:#d4d0c8;border-left:1px solid #fff;border-top:1px solid #fff;border-right:1px solid #404040;border-bottom:1px solid #404040;box-shadow:inset -1px -1px 0 #808080;"></div>
<div class="a " style="left:182px;top:921px;width:1091px;height:1px;background:#d8d8d8"></div>
<div class="a " style="left:182px;top:935px;width:1091px;height:1px;background:#d8d8d8"></div>
<div class="a " style="left:182px;top:949px;width:1091px;height:1px;background:#d8d8d8"></div>
<div class="a " style="left:182px;top:963px;width:1091px;height:1px;background:#e0e0e0"></div>
<div class="a " style="left:232px;top:906px;width:1px;height:57px;background:#d8d8d8"></div>
<div class="a " style="left:367px;top:906px;width:1px;height:57px;background:#d8d8d8"></div>
<div class="a " style="left:953px;top:906px;width:1px;height:57px;background:#d8d8d8"></div>
<div class="a t" style="left:374px;top:910px;font-size:11px;letter-spacing:-0.25px">rjmexam03 compiled successfully</div>
<div class="a " style="left:176px;top:973px;width:1101px;height:17px;background:#d4d0c8;border-top:1px solid #808080;border-left:1px solid #808080;border-right:1px solid #fff;border-bottom:1px solid #fff;"></div>
<div class="a " style="left:0px;top:993px;width:1280px;height:1px;background:#404040"></div>
<div class="a " style="left:173px;top:740px;width:1px;height:253px;background:#fff"></div>
<svg class="a" style="left:1262px;top:977px" width="15" height="15" viewBox="0 0 15 15" shape-rendering="crispEdges"><path d="M14 1 L1 14 M14 5 L5 14 M14 9 L9 14" stroke="#fff"/><path d="M14 2 L2 14 M14 6 L6 14 M14 10 L10 14" stroke="#808080" stroke-width="1"/></svg>
<div class="a " style="left:0px;top:0px;width:8px;height:8px;background:#2a1a14"></div>
<div class="a " style="left:0px;top:110px;width:6px;height:12px;background:#2a1a14"></div>
<div class="a " style="left:0px;top:226px;width:6px;height:12px;background:#2a1a14"></div>
<div class="a " style="left:0px;top:0px;width:275px;height:117px;background:#fff;border:2px solid #a8a8a8;border-radius:9px;"></div>
<div class="a " style="left:6px;top:6px;width:262px;height:94px;background:#b4b4b4;border-top:1px solid #d8d8d8;border-left:1px solid #d8d8d8;"></div>
<div class="a " style="left:10px;top:13px;width:256px;height:75px;background:#2ec4c8"></div>
<div class="a t" style="left:100px;top:2px;font-family:'Liberation Serif',serif;font-weight:bold;font-style:italic;font-size:10px;color:#f6ede2;">Tangerine Dreams</div>
<div class="a " style="left:248px;top:4px;width:5px;height:4px;background:#ddd;border:1px solid #aaa"></div>
<div class="a " style="left:257px;top:4px;width:5px;height:4px;background:#ddd;border:1px solid #aaa"></div>
<div class="a " style="left:265px;top:4px;width:5px;height:4px;background:#ddd;border:1px solid #aaa"></div>
<div class="a " style="left:13px;top:25px;width:80px;height:43px;background:#f2f2f2;border:1px solid #9a9a9a;box-shadow:1px 1px 0 #888"></div>
<div class="a " style="left:14px;top:26px;width:6px;height:6px;background:#bbb;border:1px solid #888"></div>
<div class="a " style="left:15px;top:37px;width:5px;height:28px;background:#e8e8e8"></div>
<div class="a " style="left:16px;top:36px;width:4px;height:4px;background:#ccc;border:1px solid #999"></div>
<div class="a " style="left:16px;top:44px;width:4px;height:4px;background:#ccc;border:1px solid #999"></div>
<div class="a " style="left:16px;top:51px;width:4px;height:4px;background:#ccc;border:1px solid #999"></div>
<div class="a " style="left:16px;top:58px;width:4px;height:4px;background:#ccc;border:1px solid #999"></div>
<div class="a " style="left:22px;top:18px;width:80px;height:9px;background:#f4f4f4"></div>
<div class="a t" style="left:46px;top:18px;font-size:8px;color:#888;letter-spacing:0.5px;font-family:'Liberation Mono',monospace;">WINAMP</div>
<div class="a " style="left:24px;top:20px;width:5px;height:5px;background:#bbb;border:1px solid #888"></div>
<div class="a " style="left:91px;top:20px;width:5px;height:5px;background:#bbb;border:1px solid #888"></div>
<div class="a " style="left:97px;top:20px;width:5px;height:5px;background:#bbb;border:1px solid #888"></div>
<div class="a " style="left:23px;top:26px;width:78px;height:34px;background:#2f9a08;box-shadow:1px 2px 0 #888"></div>
<div class="a t" style="left:25px;top:27px;font-family:'Liberation Sans',sans-serif;font-weight:bold;font-size:11px;color:#e8ffc8;">.&gt;</div>
<svg class="a" style="left:45px;top:27px" width="56" height="14"><g font-family="Liberation Sans" font-weight="bold" font-size="13" fill="#e8ffc8"><text x="2" y="12">0</text><text x="14" y="12">0</text><text x="26" y="11">:</text><text x="33" y="12">2</text><text x="45" y="12">9</text></g></svg>
<div class="a " style="left:24px;top:55px;width:3px;height:4px;background:#22d622"></div>
<div class="a " style="left:24px;top:53px;width:3px;height:1px;background:#22d622"></div>
<div class="a " style="left:28px;top:54px;width:3px;height:5px;background:#22d622"></div>
<div class="a " style="left:28px;top:51px;width:3px;height:1px;background:#22d622"></div>
<div class="a " style="left:32px;top:56px;width:3px;height:3px;background:#22d622"></div>
<div class="a " style="left:32px;top:53px;width:3px;height:1px;background:#22d622"></div>
<div class="a " style="left:36px;top:54px;width:3px;height:5px;background:#22d622"></div>
<div class="a " style="left:40px;top:49px;width:3px;height:10px;background:#22d622"></div>
<div class="a " style="left:40px;top:46px;width:3px;height:1px;background:#22d622"></div>
<div class="a " style="left:44px;top:49px;width:3px;height:10px;background:#22d622"></div>
<div class="a " style="left:44px;top:46px;width:3px;height:1px;background:#22d622"></div>
<div class="a " style="left:48px;top:54px;width:3px;height:5px;background:#22d622"></div>
<div class="a " style="left:48px;top:51px;width:3px;height:1px;background:#22d622"></div>
<div class="a " style="left:52px;top:51px;width:3px;height:8px;background:#22d622"></div>
<div class="a " style="left:52px;top:48px;width:3px;height:1px;background:#22d622"></div>
<div class="a " style="left:56px;top:46px;width:3px;height:13px;background:#22d622"></div>
<div class="a " style="left:60px;top:50px;width:3px;height:9px;background:#22d622"></div>
<div class="a " style="left:60px;top:46px;width:3px;height:1px;background:#22d622"></div>
<div class="a " style="left:64px;top:47px;width:3px;height:12px;background:#22d622"></div>
<div class="a " style="left:68px;top:45px;width:3px;height:14px;background:#22d622"></div>
<div class="a " style="left:72px;top:45px;width:3px;height:14px;background:#22d622"></div>
<div class="a " style="left:76px;top:45px;width:3px;height:14px;background:#22d622"></div>
<div class="a " style="left:80px;top:48px;width:3px;height:11px;background:#22d622"></div>
<div class="a " style="left:80px;top:46px;width:3px;height:1px;background:#22d622"></div>
<div class="a " style="left:84px;top:47px;width:3px;height:12px;background:#22d622"></div>
<div class="a " style="left:88px;top:51px;width:3px;height:8px;background:#22d622"></div>
<div class="a " style="left:88px;top:48px;width:3px;height:1px;background:#22d622"></div>
<div class="a " style="left:92px;top:54px;width:3px;height:5px;background:#22d622"></div>
<div class="a " style="left:92px;top:51px;width:3px;height:1px;background:#22d622"></div>
<div class="a " style="left:96px;top:58px;width:3px;height:1px;background:#22d622"></div>
<div class="a " style="left:66px;top:73px;width:28px;height:8px;background:#f0f0f0;border:1px solid #999"></div>
<div class="a " style="left:67px;top:74px;width:5px;height:5px;background:#ccc;border:1px solid #888"></div>
<div class="a " style="left:83px;top:74px;width:4px;height:5px;background:#ccc;border:1px solid #888"></div>
<div class="a " style="left:88px;top:74px;width:4px;height:5px;background:#ccc;border:1px solid #888"></div>
<svg class="a" style="left:240px;top:14px" width="20" height="10"><path d="M4 8 Q4 2 10 1.5 Q16 2 16 8Z" fill="#e8dada" stroke="#1a4a4a" stroke-width="0.8"/><path d="M1 8.5 H19" stroke="#111" stroke-width="1.2"/></svg>
<div class="a " style="left:104px;top:23px;width:162px;height:54px;background:#b8b8b8"></div>
<div class="a " style="left:105px;top:24px;width:160px;height:12px;background:#f2f2f2"></div>
<div class="a " style="left:106px;top:26px;width:6px;height:6px;background:#bbb;border:1px solid #888"></div>
<div class="a t" style="left:111px;top:25px;font-size:10px;color:#666;letter-spacing:0.22px;">206. Spacekats - Mellow (2:06)</div>
<div class="a " style="left:105px;top:36px;width:160px;height:37px;background:#64c0f6"></div>
<svg class="a" style="left:105px;top:36px" width="160" height="37" viewBox="0 0 160 37">
<path d="M2 14 Q4 6 12 7 Q16 1 24 4 Q30 3 32 9 Q36 12 34 15 Z" fill="#f6f6f6" stroke="#d8dce8"/>
<path d="M46 12 Q48 6 54 7 Q58 3 64 6 Q70 7 70 13 Z" fill="#f6f6f6" stroke="#d8dce8"/>
<path d="M118 14 Q120 8 128 9 Q132 4 140 6 Q146 4 150 8 Q156 8 156 13 Z" fill="#f6f6f6" stroke="#d8dce8"/>
<text x="7" y="13" font-family="Liberation Mono" font-size="7.5" fill="#555">160</text>
<text x="51" y="12" font-family="Liberation Mono" font-size="7.5" fill="#555">44</text>
<path d="M0 24 Q10 18 22 21 Q34 16 46 21 Q58 17 70 20 Q82 14 96 19 Q110 16 124 20 Q140 15 160 19 L160 37 L0 37Z" fill="#0dc40d"/>
<path d="M0 29 Q40 25 80 28 Q120 25 160 27 L160 37 L0 37Z" fill="#18d818"/>
<ellipse cx="8" cy="24" rx="5" ry="6" fill="#3a1a1a"/><circle cx="9" cy="27" r="2.5" fill="#c22"/><circle cx="6" cy="33" r="2" fill="#b33"/>
<path d="M12 30 Q15 24 17 31 Q20 25 22 31 Q26 24 29 30 Q33 26 36 30 Q40 27 43 30 Q48 29 52 28 L56 25" fill="none" stroke="#0a3a1a" stroke-width="1.6"/>
<path d="M50 26 L56 22" stroke="#c33" stroke-width="2.5"/>
<rect x="60" y="19" width="4" height="8" fill="#fff" stroke="#333" stroke-width="0.6"/><path d="M61 27 V34 M63 27 V34" stroke="#933" stroke-width="1.5"/><ellipse cx="62" cy="35" rx="3" ry="1" fill="#ddd"/>
<path d="M60 8 Q62 2 70 4 L74 2 Q84 1 88 7 L92 9 Q86 12 84 14 Q78 19 70 17 Q62 16 60 8Z" fill="#c8c8c8" stroke="#222" stroke-width="0.8"/><circle cx="80" cy="6" r="4" fill="#eee" stroke="#222" stroke-width="0.6"/>
<rect x="76.5" y="23.5" width="20" height="11" fill="#222" stroke="#000"/><rect x="81" y="26" width="11" height="6" fill="#555"/><path d="M80 23 V20 H93 V23" fill="none" stroke="#222"/>
<rect x="111" y="25" width="10" height="8" fill="#7a3ac8"/><circle cx="124" cy="30" r="3" fill="#f0a030"/><path d="M119 18 L124 12 L126 22 L134 20" stroke="#513" stroke-width="1.5" fill="none"/><circle cx="126" cy="13" r="2.5" fill="#ccd" stroke="#222" stroke-width="0.6"/>
<path d="M134 37 Q134 28 140 27 Q146 28 146 35" fill="#a050d0"/><rect x="137" y="13" width="4" height="14" fill="#ee3" stroke="#333" stroke-width="0.5"/><rect x="146" y="25" width="12" height="8" fill="#a050d0" opacity="0.9"/>
<path d="M122 36 L130 34 M138 36 L146 35" stroke="#d33" stroke-width="1.5"/>
</svg>
<div class="a " style="left:12px;top:88px;width:254px;height:9px;background:#fafafa"></div>
<div class="a t" style="left:18px;top:89px;font-size:8px;font-weight:bold;color:#222;">Prev</div>
<div class="a t" style="left:41px;top:89px;font-size:8px;font-weight:bold;color:#222;">Play</div>
<div class="a t" style="left:63px;top:89px;font-size:8px;font-weight:bold;color:#222;">Paus</div>
<div class="a t" style="left:86px;top:89px;font-size:8px;font-weight:bold;color:#222;">Stop</div>
<div class="a t" style="left:110px;top:89px;font-size:8px;font-weight:bold;color:#222;">Next</div>
<div class="a t" style="left:136px;top:89px;font-size:8px;font-weight:bold;color:#222;">Open</div>
<div class="a t" style="left:170px;top:89px;font-size:8px;font-weight:bold;color:#222;">✓Shuffle</div>
<div class="a t" style="left:214px;top:89px;font-size:8px;font-weight:bold;color:#222;">✓Rep</div>
<div class="a t" style="left:257px;top:88px;font-size:8px;color:#e44;">★</div>
<div class="a " style="left:49px;top:101px;width:19px;height:11px;background:#f59c10;border-radius:50%;box-shadow:inset 0 0 0 1px #e88a00"></div>
<div class="a " style="left:97px;top:104px;width:83px;height:6px;background:#f59c10;border-radius:3px"></div>
<div class="a " style="left:211px;top:101px;width:19px;height:11px;background:#f59c10;border-radius:50%;box-shadow:inset 0 0 0 1px #e88a00"></div>
<div class="a " style="left:0px;top:116px;width:275px;height:117px;background:#fff;border:2px solid #a8a8a8;border-radius:9px;"></div>
<div class="a " style="left:5px;top:124px;width:264px;height:104px;background:#b4b4b4;border-top:1px solid #d8d8d8;border-left:1px solid #d8d8d8;"></div>
<div class="a " style="left:9px;top:130px;width:257px;height:92px;background:#2ec4c8"></div>
<div class="a " style="left:256px;top:121px;width:5px;height:4px;background:#ddd;border:1px solid #aaa"></div>
<div class="a " style="left:264px;top:121px;width:5px;height:4px;background:#ddd;border:1px solid #aaa"></div>
<div class="a " style="left:17px;top:134px;width:240px;height:8px;background:#f2f2f2"></div>
<div class="a " style="left:18px;top:135px;width:5px;height:5px;background:#ccc;border:1px solid #999"></div>
<div class="a t" style="left:24px;top:134px;font-size:8.5px;color:#707070;font-family:'Liberation Mono',monospace;letter-spacing:-0.4px;">OFF MANUAL</div>
<div class="a t" style="left:226px;top:134px;font-size:8.5px;color:#707070;font-family:'Liberation Mono',monospace;letter-spacing:-0.4px;">SETS</div>
<div class="a " style="left:246px;top:135px;width:5px;height:5px;background:#ccc;border:1px solid #999"></div>
<div class="a " style="left:252px;top:135px;width:5px;height:5px;background:#ccc;border:1px solid #999"></div>
<div class="a " style="left:17px;top:142px;width:240px;height:77px;background:#1ed81e"></div>
<svg class="a" style="left:17px;top:142px" width="240" height="77" viewBox="0 0 240 77">
<defs><g id="tr"><path d="M-4 0.5 H4 Q4.5 7 0 8 Q-4.5 7 -4 0.5Z" fill="#f0d020" stroke="#6a5000" stroke-width="0.8"/><rect x="-1" y="8" width="2" height="3" fill="#a08000"/><rect x="-4.5" y="11" width="9" height="12" fill="#c09a00" stroke="#5a4000" stroke-width="0.8"/><rect x="-1.5" y="13" width="3" height="8" fill="#fff060"/><rect x="-6" y="22.5" width="12" height="4" fill="#8a6a10" stroke="#4a3000" stroke-width="0.6"/></g></defs>
<rect x="0" y="0" width="240" height="9" fill="#283868"/>
<ellipse cx="22" cy="5" rx="20" ry="6" fill="#606878"/><ellipse cx="110" cy="4" rx="14" ry="3" fill="#5a6278"/><ellipse cx="180" cy="3" rx="12" ry="3" fill="#5a6278"/>
<path d="M0 12 Q8 6 16 10 Q26 4 36 9 Q48 5 60 9 Q72 3 86 8 Q100 4 112 8 Q126 3 140 7 Q154 4 168 8 Q182 4 196 8 Q212 4 226 8 Q234 6 240 8 L240 77 L0 77Z" fill="#1ed81e" stroke="#0aa00a" stroke-width="1.5"/>
<rect x="60" y="32" width="1" height="4" fill="#c08040"/><rect x="114" y="33" width="1" height="2" fill="#80e080"/><rect x="214" y="29" width="1" height="2" fill="#80e080"/><rect x="49" y="39" width="1" height="4" fill="#80e080"/><rect x="115" y="36" width="1" height="2" fill="#40e0e0"/><rect x="151" y="45" width="1" height="3" fill="#80e080"/><rect x="175" y="37" width="1" height="2" fill="#e8e040"/><rect x="179" y="34" width="1" height="2" fill="#c08040"/><rect x="194" y="21" width="1" height="4" fill="#80e080"/><rect x="217" y="26" width="1" height="3" fill="#e0a040"/><rect x="172" y="33" width="1" height="3" fill="#40e0e0"/><rect x="27" y="15" width="1" height="3" fill="#40e0e0"/><rect x="227" y="27" width="1" height="3" fill="#d06040"/><rect x="102" y="43" width="1" height="3" fill="#80e080"/><rect x="128" y="26" width="1" height="3" fill="#40e0e0"/><rect x="162" y="47" width="1" height="4" fill="#c08040"/><rect x="159" y="17" width="1" height="4" fill="#c08040"/><rect x="213" y="33" width="1" height="4" fill="#d06040"/><rect x="54" y="43" width="1" height="3" fill="#80e080"/><rect x="71" y="13" width="1" height="3" fill="#d06040"/><rect x="25" y="42" width="1" height="2" fill="#e0a040"/><rect x="10" y="27" width="1" height="2" fill="#e0a040"/><rect x="15" y="35" width="1" height="3" fill="#e8e040"/><rect x="170" y="23" width="1" height="4" fill="#c08040"/><rect x="59" y="11" width="1" height="2" fill="#e8e040"/><rect x="30" y="31" width="1" height="3" fill="#40e0e0"/><rect x="72" y="21" width="1" height="2" fill="#d06040"/><rect x="230" y="24" width="1" height="2" fill="#c08040"/><rect x="211" y="25" width="1" height="4" fill="#e0a040"/><rect x="94" y="45" width="1" height="4" fill="#d06040"/><rect x="29" y="49" width="1" height="3" fill="#80e080"/><rect x="104" y="39" width="1" height="3" fill="#40e0e0"/><rect x="106" y="20" width="1" height="4" fill="#c08040"/><rect x="83" y="42" width="1" height="3" fill="#80e080"/><rect x="10" y="35" width="1" height="2" fill="#d06040"/><rect x="19" y="35" width="1" height="3" fill="#e0a040"/><rect x="161" y="24" width="1" height="3" fill="#d06040"/><rect x="175" y="11" width="1" height="4" fill="#e8e040"/><rect x="10" y="25" width="1" height="3" fill="#d06040"/><rect x="74" y="34" width="1" height="3" fill="#40e0e0"/><rect x="48" y="40" width="1" height="3" fill="#80e080"/><rect x="74" y="25" width="1" height="4" fill="#e8e040"/><rect x="162" y="15" width="1" height="2" fill="#80e080"/><rect x="155" y="21" width="1" height="2" fill="#c08040"/><rect x="161" y="36" width="1" height="2" fill="#e8e040"/><rect x="143" y="48" width="1" height="2" fill="#d06040"/><rect x="106" y="44" width="1" height="2" fill="#40e0e0"/><rect x="82" y="36" width="1" height="3" fill="#80e080"/><rect x="67" y="41" width="1" height="4" fill="#e8e040"/><rect x="225" y="23" width="1" height="2" fill="#80e080"/><rect x="204" y="24" width="1" height="2" fill="#d06040"/><rect x="190" y="24" width="1" height="3" fill="#40e0e0"/><rect x="72" y="42" width="1" height="3" fill="#c08040"/><rect x="85" y="27" width="1" height="4" fill="#e0a040"/><rect x="99" y="47" width="1" height="2" fill="#40e0e0"/><rect x="6" y="48" width="1" height="4" fill="#80e080"/><rect x="105" y="48" width="1" height="2" fill="#d06040"/><rect x="12" y="28" width="1" height="4" fill="#d06040"/><rect x="124" y="22" width="1" height="2" fill="#c08040"/><rect x="203" y="44" width="1" height="2" fill="#c08040"/><rect x="191" y="12" width="1" height="4" fill="#d06040"/><rect x="217" y="46" width="1" height="4" fill="#e0a040"/><rect x="16" y="29" width="1" height="2" fill="#e8e040"/><rect x="121" y="20" width="1" height="4" fill="#e8e040"/><rect x="129" y="12" width="1" height="2" fill="#80e080"/><rect x="84" y="20" width="1" height="3" fill="#80e080"/><rect x="192" y="12" width="1" height="2" fill="#40e0e0"/><rect x="33" y="46" width="1" height="2" fill="#e8e040"/><rect x="60" y="21" width="1" height="2" fill="#40e0e0"/><rect x="117" y="33" width="1" height="2" fill="#e0a040"/>
<use href="#tr" x="10" y="38"/><use href="#tr" x="68" y="30"/><use href="#tr" x="85" y="32"/><use href="#tr" x="103" y="38"/><use href="#tr" x="122" y="49"/><use href="#tr" x="140" y="46"/><use href="#tr" x="158" y="38"/><use href="#tr" x="176" y="42"/><use href="#tr" x="194" y="24"/><use href="#tr" x="212" y="22"/><use href="#tr" x="230" y="22"/>
<ellipse cx="41" cy="19" rx="13" ry="14" fill="#101010"/><path d="M29 14 Q41 2 53 14 Q47 10 41 16 Q35 10 29 14Z" fill="#d02020"/><ellipse cx="41" cy="24" rx="8" ry="7" fill="#c01818"/>
<path d="M34 13 L41 18 L48 13 L41 10Z" fill="#a0f0e0" stroke="#fff" stroke-width="0.6"/><ellipse cx="41" cy="26" rx="5" ry="3" fill="#fff"/>
<path d="M53 18 Q60 14 64 19 Q60 23 53 21Z" fill="#f0a030" stroke="#805010" stroke-width="0.6"/>
<circle cx="26" cy="35" r="3.5" fill="#a030c0"/><circle cx="56" cy="32" r="3.5" fill="#a030c0"/>
<ellipse cx="41" cy="38" rx="6" ry="3" fill="#fff" stroke="#000" stroke-width="0.6"/><path d="M41 41 V50 M36 46 L46 44" stroke="#105010" stroke-width="1.5"/>
<path d="M28 53 L36 48 L44 52 L50 50 L48 62 L40 68 L30 66 L26 60Z" fill="#f8e020" stroke="#806000" stroke-width="0.8"/>
<path d="M26 66 L50 64 L48 73 L28 73Z" fill="#a07030" stroke="#503010" stroke-width="0.6"/>
</svg>
<div class="a " style="left:0px;top:232px;width:275px;height:521px;background:#fff;border:2px solid #a8a8a8;border-radius:9px;"></div>
<div class="a " style="left:5px;top:240px;width:264px;height:510px;background:#b4b4b4;border-top:1px solid #d8d8d8;border-left:1px solid #d8d8d8;"></div>
<div class="a " style="left:9px;top:247px;width:257px;height:498px;background:#2ec4c8"></div>
<div class="a " style="left:9px;top:246px;width:257px;height:6px;background:#ececec"></div>
<div class="a " style="left:12px;top:247px;width:4px;height:4px;background:#ccc;border:1px solid #aaa"></div>
<div class="a t" style="left:100px;top:246px;font-size:7px;font-weight:bold;color:#a0a0a0;letter-spacing:0.1px;">INSTANT MESSENGER</div>
<div class="a " style="left:9px;top:247px;width:3px;height:473px;background:#b8b8b8;border-left:1px solid #d8d8d8"></div>
<div class="a " style="left:12px;top:252px;width:248px;height:466px;background:#fff"></div>
<div class="a " style="left:259px;top:252px;width:1px;height:467px;background:#999"></div>
<div class="a " style="left:12px;top:718px;width:248px;height:2px;background:#a8a8a8"></div>
<div class="a " style="left:12px;top:354px;width:249px;height:14px;background:#ececec"></div>
<div class="a t" style="left:12px;top:257px;font-size:10px;letter-spacing:0.2px;color:#000;width:247px;overflow:hidden">191. Filo Bedo - Flying High</div>
<div class="a t" style="left:12px;top:271px;font-size:10px;letter-spacing:0.2px;color:#000;width:247px;overflow:hidden">192. Reflection Theory - Hand of T</div>
<div class="a t" style="left:12px;top:285px;font-size:10px;letter-spacing:0.2px;color:#000;width:247px;overflow:hidden">193. Digital Explosion - Hardcore c</div>
<div class="a t" style="left:12px;top:299px;font-size:10px;letter-spacing:0.2px;color:#000;width:247px;overflow:hidden">194. Indiggo - Hip Hop Jam</div>
<div class="a t" style="left:12px;top:313px;font-size:10px;letter-spacing:0.2px;color:#000;width:247px;overflow:hidden">195. Machinae Supremacy - Hybri</div>
<div class="a t" style="left:12px;top:327px;font-size:10px;letter-spacing:0.2px;color:#000;width:247px;overflow:hidden">196. Sammi Morelli - I&#x27;ll Get There A</div>
<div class="a t" style="left:12px;top:341px;font-size:10px;letter-spacing:0.2px;color:#000;width:247px;overflow:hidden">197. Inspector K - Infection</div>
<div class="a t" style="left:12px;top:355px;font-size:10px;letter-spacing:0.2px;color:#000;width:247px;overflow:hidden">198. Smiley - July</div>
<div class="a t" style="left:12px;top:369px;font-size:10px;letter-spacing:0.2px;color:#000;width:247px;overflow:hidden">199. KaW - Kagami</div>
<div class="a t" style="left:12px;top:383px;font-size:10px;letter-spacing:0.2px;color:#000;width:247px;overflow:hidden">200. Crispy - Kiss Me Red</div>
<div class="a t" style="left:12px;top:397px;font-size:10px;letter-spacing:0.2px;color:#000;width:247px;overflow:hidden">201. Spacekats - Land Of The Ris</div>
<div class="a t" style="left:12px;top:411px;font-size:10px;letter-spacing:0.2px;color:#000;width:247px;overflow:hidden">202. E-Rotic - Lemmings on the Ru</div>
<div class="a t" style="left:12px;top:425px;font-size:10px;letter-spacing:0.2px;color:#000;width:247px;overflow:hidden">203. Sammi Morelli - Let Me Be Th</div>
<div class="a t" style="left:12px;top:439px;font-size:10px;letter-spacing:0.2px;color:#000;width:247px;overflow:hidden">204. Nina - Let My Love Go Blind</div>
<div class="a t" style="left:12px;top:453px;font-size:10px;letter-spacing:0.2px;color:#000;width:247px;overflow:hidden">205. Inspector K - Liquid Moon</div>
<div class="a t" style="left:12px;top:467px;font-size:10px;letter-spacing:0.2px;color:#d01818;width:247px;overflow:hidden">206. Spacekats - Mellow</div>
<div class="a t" style="left:12px;top:481px;font-size:10px;letter-spacing:0.2px;color:#000;width:247px;overflow:hidden">207. Natalie Browne - My Favourit</div>
<div class="a t" style="left:12px;top:495px;font-size:10px;letter-spacing:0.2px;color:#000;width:247px;overflow:hidden">208. Digital Explosion - Mythology</div>
<div class="a t" style="left:12px;top:509px;font-size:10px;letter-spacing:0.2px;color:#000;width:247px;overflow:hidden">209. Anet - No 1 Nation</div>
<div class="a t" style="left:12px;top:523px;font-size:10px;letter-spacing:0.2px;color:#000;width:247px;overflow:hidden">210. Anet - Normal</div>
<div class="a t" style="left:231px;top:523px;font-size:10px;letter-spacing:0.2px;">1:58</div>
<div class="a t" style="left:12px;top:537px;font-size:10px;letter-spacing:0.2px;color:#000;width:247px;overflow:hidden">211. Dax - Not Worth The Paper</div>
<div class="a t" style="left:231px;top:537px;font-size:10px;letter-spacing:0.2px;">2:00</div>
<div class="a t" style="left:12px;top:551px;font-size:10px;letter-spacing:0.2px;color:#000;width:247px;overflow:hidden">212. KaW - Oasis</div>
<div class="a t" style="left:231px;top:551px;font-size:10px;letter-spacing:0.2px;">1:48</div>
<div class="a t" style="left:12px;top:565px;font-size:10px;letter-spacing:0.2px;color:#000;width:247px;overflow:hidden">213. Obsession - On A Day Like Today</div>
<div class="a t" style="left:231px;top:565px;font-size:10px;letter-spacing:0.2px;">2:04</div>
<div class="a t" style="left:12px;top:579px;font-size:10px;letter-spacing:0.2px;color:#000;width:247px;overflow:hidden">214. MC Frontalot - PA Theme</div>
<div class="a t" style="left:231px;top:579px;font-size:10px;letter-spacing:0.2px;">2:05</div>
<div class="a t" style="left:12px;top:593px;font-size:10px;letter-spacing:0.2px;color:#000;width:247px;overflow:hidden">215. ZiGZaG - Pandemonium</div>
<div class="a t" style="left:231px;top:593px;font-size:10px;letter-spacing:0.2px;">1:55</div>
<div class="a t" style="left:12px;top:607px;font-size:10px;letter-spacing:0.2px;color:#000;width:247px;overflow:hidden">216. Sammi Morelli - Perfect</div>
<div class="a t" style="left:231px;top:607px;font-size:10px;letter-spacing:0.2px;">2:04</div>
<div class="a t" style="left:12px;top:621px;font-size:10px;letter-spacing:0.2px;color:#000;width:247px;overflow:hidden">217. Missing Heart - Queen of Light</div>
<div class="a t" style="left:231px;top:621px;font-size:10px;letter-spacing:0.2px;">2:02</div>
<div class="a t" style="left:12px;top:635px;font-size:10px;letter-spacing:0.2px;color:#000;width:247px;overflow:hidden">218. Nina - ROM-eo &amp; Juli8</div>
<div class="a t" style="left:231px;top:635px;font-size:10px;letter-spacing:0.2px;">2:03</div>
<div class="a t" style="left:12px;top:649px;font-size:10px;letter-spacing:0.2px;color:#000;width:247px;overflow:hidden">219. Mind Reflection - Remember December</div>
<div class="a t" style="left:231px;top:649px;font-size:10px;letter-spacing:0.2px;">2:05</div>
<div class="a t" style="left:12px;top:663px;font-size:10px;letter-spacing:0.2px;color:#000;width:247px;overflow:hidden">220. Evolution - Solina</div>
<div class="a t" style="left:231px;top:663px;font-size:10px;letter-spacing:0.2px;">2:04</div>
<div class="a t" style="left:12px;top:677px;font-size:10px;letter-spacing:0.2px;color:#000;width:247px;overflow:hidden">221. Symphonius feat. Rossini - Tell</div>
<div class="a t" style="left:231px;top:677px;font-size:10px;letter-spacing:0.2px;">1:51</div>
<div class="a t" style="left:12px;top:691px;font-size:10px;letter-spacing:0.2px;color:#000;width:247px;overflow:hidden">222. Inspector K - Tension</div>
<div class="a t" style="left:231px;top:691px;font-size:10px;letter-spacing:0.2px;">1:56</div>
<div class="a t" style="left:12px;top:705px;font-size:10px;letter-spacing:0.2px;color:#000;width:247px;overflow:hidden">223. Kid Whatever - That Sound</div>
<div class="a t" style="left:231px;top:705px;font-size:10px;letter-spacing:0.2px;">1:57</div>
<div class="a " style="left:9px;top:720px;width:257px;height:26px;background:#2ec4c8"></div>
<svg class="a" style="left:14px;top:723px" width="250" height="22" viewBox="0 0 250 22">
<path d="M3 4 L14 2 L18 16 L7 19Z" fill="#7a9ae8" stroke="#335"/><ellipse cx="10" cy="10" rx="4" ry="3" fill="#5060c0"/>
<path d="M33 5 H45 L43 20 H35Z" fill="#eee" stroke="#444"/><rect x="32" y="3" width="14" height="2" fill="#666"/>
<rect x="62" y="4" width="10" height="8" fill="#9ab" stroke="#345"/><rect x="69" y="2" width="9" height="9" fill="#eef" stroke="#345"/><path d="M64 12 L76 20" stroke="#c90" stroke-width="2"/>
<rect x="89" y="3" width="16" height="16" fill="#e8e8e8" stroke="#666"/><rect x="91" y="6" width="11" height="8" fill="#789" /><rect x="93" y="9" width="8" height="4" fill="#fff"/>
<rect x="113" y="1" width="97" height="22" fill="#e8e8e8"/><rect x="113" y="10" width="97" height="13" fill="#f8f8f8"/>
<text x="117" y="8.5" font-family="Liberation Mono" font-size="8.5" fill="#666">2:06/36:30:48+</text>
<path d="M117 15 V21 M119 18 L122 15 V21Z M125 15 L129 18 L125 21Z M132 15 V21 M134 15 V21 M137 15 H141 V21 H137Z M144 15 L147 18 L144 21Z M148 15 V21 M151 21 H156 M151 19 L153.5 16 L156 19Z" stroke="#e23" fill="#e23" stroke-width="1"/>
<text x="178" y="22" font-family="Liberation Mono" font-size="9" fill="#666">00:29</text>
<ellipse cx="227" cy="11" rx="7" ry="9" fill="#222"/><ellipse cx="227" cy="9" rx="5" ry="5" fill="#c22"/><rect x="224" y="12" width="6" height="4" fill="#fff"/>
</svg>
<div class="a " style="left:174px;top:198px;width:668px;height:330px;background:#d4d0c8;border-top:1px solid #d4d0c8;border-left:1px solid #d4d0c8;border-right:1px solid #404040;border-bottom:1px solid #404040;box-shadow:inset 1px 1px 0 #fff,inset -1px -1px 0 #808080;"></div>
<div class="a " style="left:178px;top:202px;width:660px;height:18px;background:linear-gradient(to right,#0a246a 0px,#a6caf0 660px);"></div>
<svg class="a" style="left:180px;top:204px" width="16" height="14"><rect x="0" y="0" width="16" height="14" fill="#000"/><rect x="0" y="0" width="16" height="2" fill="#8ab"/><text x="1" y="11" font-family="Liberation Sans" font-size="8" font-weight="bold" fill="#fff">C:\</text></svg>
<div class="a t" style="left:198px;top:206px;font-weight:bold;color:#fff;font-size:12px;letter-spacing:0.2px;">C:\Documents and Settings\Rach\Desktop\rjmexam03\rjmexam03.exe</div>
<div class="a " style="left:786px;top:204px;width:16px;height:14px;background:#d4d0c8;border-top:1px solid #fff;border-left:1px solid #fff;border-right:1px solid #404040;border-bottom:1px solid #404040;box-shadow:inset -1px -1px 0 #808080;"><svg class="a" style="left:0;top:0" width="14" height="12"><rect x="3" y="7" width="6" height="2" fill="#000"/></svg></div>
<div class="a " style="left:802px;top:204px;width:16px;height:14px;background:#d4d0c8;border-top:1px solid #fff;border-left:1px solid #fff;border-right:1px solid #404040;border-bottom:1px solid #404040;box-shadow:inset -1px -1px 0 #808080;"><svg class="a" style="left:0;top:0" width="14" height="12"><rect x="2.5" y="1.5" width="8" height="7" fill="none" stroke="#000"/><rect x="2" y="1" width="9" height="2" fill="#000"/></svg></div>
<div class="a " style="left:820px;top:204px;width:16px;height:14px;background:#d4d0c8;border-top:1px solid #fff;border-left:1px solid #fff;border-right:1px solid #404040;border-bottom:1px solid #404040;box-shadow:inset -1px -1px 0 #808080;"><svg class="a" style="left:0;top:0" width="14" height="12"><path d="M3 2 L10 9 M10 2 L3 9" stroke="#000" stroke-width="1.6"/></svg></div>
<div class="a " style="left:178px;top:220px;width:660px;height:304px;border-top:1px solid #808080;border-left:1px solid #808080;border-right:1px solid #fff;border-bottom:1px solid #fff;box-shadow:inset 1px 1px 0 #404040,inset -1px -1px 0 #d4d0c8;"></div>
<div class="a " style="left:180px;top:222px;width:640px;height:300px;background:#000"></div>
<div class="a " style="left:820px;top:222px;width:16px;height:300px;background-color:#ece9e2;background-image:repeating-conic-gradient(#d4d0c8 0 25%,#fff 0 50%);background-size:2px 2px;"></div>
<div class="a " style="left:820px;top:222px;width:16px;height:16px;background:#d4d0c8;border-top:1px solid #fff;border-left:1px solid #fff;border-right:1px solid #404040;border-bottom:1px solid #404040;box-shadow:inset -1px -1px 0 #808080;"><svg class="a" style="left:0;top:0" width="16" height="16"><path d="M4 9 L11 9 L7.5 5.5 Z" fill="#000"/></svg></div>
<div class="a " style="left:820px;top:506px;width:16px;height:16px;background:#d4d0c8;border-top:1px solid #fff;border-left:1px solid #fff;border-right:1px solid #404040;border-bottom:1px solid #404040;box-shadow:inset -1px -1px 0 #808080;"><svg class="a" style="left:0;top:0" width="16" height="16"><path d="M4 6 L11 6 L7.5 9.5 Z" fill="#000"/></svg></div>
<div class="a " style="left:820px;top:238px;width:16px;height:23px;background:#d4d0c8;border-top:1px solid #fff;border-left:1px solid #fff;border-right:1px solid #404040;border-bottom:1px solid #404040;box-shadow:inset -1px -1px 0 #808080;"></div>
<div class="a " style="left:180px;top:227px;width:232px;height:1px;background:repeating-linear-gradient(to right,transparent 0 1px,#c8c8c8 1px 7px,transparent 7px 8px)"></div>
<div class="a " style="left:180px;top:229px;width:232px;height:1px;background:repeating-linear-gradient(to right,transparent 0 1px,#c8c8c8 1px 7px,transparent 7px 8px)"></div>
<div class="a " style="left:181px;top:239px;width:6px;height:1px;background:#c8c8c8"></div>
<div class="a " style="left:181px;top:241px;width:6px;height:1px;background:#c8c8c8"></div>
<div class="a " style="left:405px;top:239px;width:6px;height:1px;background:#c8c8c8"></div>
<div class="a " style="left:405px;top:241px;width:6px;height:1px;background:#c8c8c8"></div>
<div class="a t" style="left:180px;top:236px;font-family:'Liberation Mono',monospace;font-size:13.33px;line-height:12px;color:#c8c8c8;-webkit-text-stroke:0.4px #c8c8c8;">  NAME STORER v1.0 (c) 1776  </div>
<div class="a " style="left:180px;top:251px;width:232px;height:1px;background:repeating-linear-gradient(to right,transparent 0 1px,#c8c8c8 1px 7px,transparent 7px 8px)"></div>
<div class="a " style="left:180px;top:253px;width:232px;height:1px;background:repeating-linear-gradient(to right,transparent 0 1px,#c8c8c8 1px 7px,transparent 7px 8px)"></div>
<div class="a " style="left:181px;top:263px;width:6px;height:1px;background:#c8c8c8"></div>
<div class="a " style="left:181px;top:265px;width:6px;height:1px;background:#c8c8c8"></div>
<div class="a " style="left:325px;top:263px;width:6px;height:1px;background:#c8c8c8"></div>
<div class="a " style="left:325px;top:265px;width:6px;height:1px;background:#c8c8c8"></div>
<div class="a t" style="left:180px;top:260px;font-family:'Liberation Mono',monospace;font-size:13.33px;line-height:12px;color:#c8c8c8;-webkit-text-stroke:0.4px #c8c8c8;">  1. ASSIGN  NAME  </div>
<div class="a " style="left:181px;top:275px;width:6px;height:1px;background:#c8c8c8"></div>
<div class="a " style="left:181px;top:277px;width:6px;height:1px;background:#c8c8c8"></div>
<div class="a " style="left:325px;top:275px;width:6px;height:1px;background:#c8c8c8"></div>
<div class="a " style="left:325px;top:277px;width:6px;height:1px;background:#c8c8c8"></div>
<div class="a t" style="left:180px;top:272px;font-family:'Liberation Mono',monospace;font-size:13.33px;line-height:12px;color:#c8c8c8;-webkit-text-stroke:0.4px #c8c8c8;">  2. GET     NAME  </div>
<div class="a " style="left:181px;top:287px;width:6px;height:1px;background:#c8c8c8"></div>
<div class="a " style="left:181px;top:289px;width:6px;height:1px;background:#c8c8c8"></div>
<div class="a " style="left:325px;top:287px;width:6px;height:1px;background:#c8c8c8"></div>
<div class="a " style="left:325px;top:289px;width:6px;height:1px;background:#c8c8c8"></div>
<div class="a t" style="left:180px;top:284px;font-family:'Liberation Mono',monospace;font-size:13.33px;line-height:12px;color:#c8c8c8;-webkit-text-stroke:0.4px #c8c8c8;">  3. SEARCH  NAME  </div>
<div class="a " style="left:181px;top:299px;width:6px;height:1px;background:#c8c8c8"></div>
<div class="a " style="left:181px;top:301px;width:6px;height:1px;background:#c8c8c8"></div>
<div class="a " style="left:325px;top:299px;width:6px;height:1px;background:#c8c8c8"></div>
<div class="a " style="left:325px;top:301px;width:6px;height:1px;background:#c8c8c8"></div>
<div class="a t" style="left:180px;top:296px;font-family:'Liberation Mono',monospace;font-size:13.33px;line-height:12px;color:#c8c8c8;-webkit-text-stroke:0.4px #c8c8c8;">  4. DISPLAY NAME  </div>
<div class="a " style="left:181px;top:311px;width:6px;height:1px;background:#c8c8c8"></div>
<div class="a " style="left:181px;top:313px;width:6px;height:1px;background:#c8c8c8"></div>
<div class="a " style="left:325px;top:311px;width:6px;height:1px;background:#c8c8c8"></div>
<div class="a " style="left:325px;top:313px;width:6px;height:1px;background:#c8c8c8"></div>
<div class="a t" style="left:180px;top:308px;font-family:'Liberation Mono',monospace;font-size:13.33px;line-height:12px;color:#c8c8c8;-webkit-text-stroke:0.4px #c8c8c8;">  5. QUIT          </div>
<div class="a " style="left:180px;top:323px;width:152px;height:1px;background:repeating-linear-gradient(to right,transparent 0 1px,#c8c8c8 1px 7px,transparent 7px 8px)"></div>
<div class="a " style="left:180px;top:325px;width:152px;height:1px;background:repeating-linear-gradient(to right,transparent 0 1px,#c8c8c8 1px 7px,transparent 7px 8px)"></div>
<div class="a t" style="left:180px;top:344px;font-family:'Liberation Mono',monospace;font-size:13.33px;line-height:12px;color:#c8c8c8;-webkit-text-stroke:0.4px #c8c8c8;">INVALID OPTION, TRY AGAIN.</div>
<div class="a t" style="left:180px;top:368px;font-family:'Liberation Mono',monospace;font-size:13.33px;line-height:12px;color:#c8c8c8;-webkit-text-stroke:0.4px #c8c8c8;">--&gt;</div>
<div class="a " style="left:0px;top:995px;width:1280px;height:29px;background:#d4d0c8;border-top:1px solid #fff;"></div>
<div class="a " style="left:0px;top:994px;width:1280px;height:1px;background:#d4d0c8"></div>
<div class="a " style="left:2px;top:998px;width:53px;height:22px;background:#d4d0c8;border-top:1px solid #fff;border-left:1px solid #fff;border-right:1px solid #404040;border-bottom:1px solid #404040;box-shadow:inset -1px -1px 0 #808080;"></div>
<svg class="a" style="left:5px;top:1001px" width="16" height="16"><path d="M1 3 Q4 1 7 3 L6 8 Q3 6 0 8Z" fill="#e44"/><path d="M8 3 Q11 5 15 3 L14 8 Q11 10 7 8Z" fill="#4b4"/><path d="M0 9 Q3 7 6 9 L5 14 Q2 12 -1 14Z" fill="#35c"/><path d="M7 9 Q10 11 14 9 L13 14 Q10 16 6 14Z" fill="#ec2"/></svg>
<div class="a t" style="left:22px;top:1003px;font-size:12px;font-weight:bold;">Start</div>
<div class="a " style="left:61px;top:999px;width:2px;height:20px;border-left:1px solid #808080;border-right:1px solid #fff;"></div>
<svg class="a" style="left:70px;top:1001px" width="17" height="17"><path d="M2 3 L12 1 L15 13 L4 16Z" fill="#3a88d8" stroke="#134" stroke-width="0.8"/><path d="M4.5 4.5 L11 3.5 L13 12 L6 13.5Z" fill="#d8ecff"/><path d="M10 6 Q6 6 7 9 Q8 12 11 10" stroke="#3a88d8" stroke-width="1.6" fill="none"/><path d="M13 7 L16 8 L14 10" fill="#e44"/></svg>
<svg class="a" style="left:94px;top:1001px" width="17" height="17"><circle cx="8.5" cy="8.5" r="7.5" fill="#2a5ab0"/><circle cx="9.5" cy="6" r="3" fill="#58a8e8"/><path d="M1.5 6 Q1 14 8 16 Q14 16.5 16 10 Q14 14.5 8.5 13.5 Q3 12.5 4 7 Q5 4 3 3Z" fill="#e87010"/><path d="M3 3 Q6 0.5 11 1 Q7 2 5 4Z" fill="#f0a020"/></svg>
<svg class="a" style="left:117px;top:1001px" width="17" height="17"><path d="M1 9 L8 1 L11 3 L7 7 L15 7 L8 15 L5 13 L9 9Z" fill="#f8b820" stroke="#333" stroke-width="0.9" stroke-linejoin="round"/><path d="M3 9 L8 3 M6 12 L11 8" stroke="#fff6c0" stroke-width="1"/></svg>
<div class="a t" style="left:145px;top:1000px;font-size:14px;font-weight:bold;">»</div>
<div class="a " style="left:160px;top:999px;width:2px;height:20px;border-left:1px solid #808080;border-right:1px solid #fff;"></div>
<div class="a " style="left:166px;top:997px;width:107px;height:23px;background:#d4d0c8;border-top:1px solid #fff;border-left:1px solid #fff;border-right:1px solid #404040;border-bottom:1px solid #404040;box-shadow:inset -1px -1px 0 #808080;"></div>
<svg class="a" style="left:171px;top:1001px" width="16" height="16"><path d="M1 9 L8 1 L11 3 L7 7 L15 7 L8 15 L5 13 L9 9Z" fill="#f8b820" stroke="#333" stroke-width="0.9" stroke-linejoin="round"/><path d="M3 9 L8 3 M6 12 L11 8" stroke="#fff6c0" stroke-width="1"/></svg>
<div class="a t" style="left:190px;top:1004px;font-size:11px;letter-spacing:-0.1px;">206. Spaceka...</div>
<div class="a " style="left:276px;top:997px;width:107px;height:23px;background:#d4d0c8;border-top:1px solid #fff;border-left:1px solid #fff;border-right:1px solid #404040;border-bottom:1px solid #404040;box-shadow:inset -1px -1px 0 #808080;"></div>
<svg class="a" style="left:281px;top:1001px" width="16" height="16"><circle cx="8" cy="8" r="7" fill="#2a5ab0"/><circle cx="9" cy="6" r="3" fill="#58a8e8"/><path d="M1.5 6 Q1 13 7 15 Q13 16 15 10 Q13 14 8 13 Q3 12 4 7 Q5 4 3 3Z" fill="#e87010"/><path d="M3 3 Q6 0.5 10 1 Q6 2 5 4Z" fill="#f0a020"/></svg>
<div class="a t" style="left:300px;top:1004px;font-size:11px;letter-spacing:-0.1px;">Search - Wiki...</div>
<div class="a " style="left:386px;top:997px;width:107px;height:23px;background:#d4d0c8;border-top:1px solid #fff;border-left:1px solid #fff;border-right:1px solid #404040;border-bottom:1px solid #404040;box-shadow:inset -1px -1px 0 #808080;"></div>
<svg class="a" style="left:391px;top:1001px" width="16" height="16"><path d="M3 1.5 H12 L13.5 3 V15.5 H3Z" fill="#c8cce0" stroke="#334"/><path d="M8 3 V14" stroke="#334" stroke-width="1"/><rect x="6" y="5" width="4" height="2" fill="#334"/></svg>
<div class="a t" style="left:410px;top:1004px;font-size:11px;letter-spacing:-0.1px;">Volume Control</div>
<div class="a " style="left:496px;top:997px;width:107px;height:23px;background:#d4d0c8;border-top:1px solid #fff;border-left:1px solid #fff;border-right:1px solid #404040;border-bottom:1px solid #404040;box-shadow:inset -1px -1px 0 #808080;"></div>
<svg class="a" style="left:501px;top:1001px" width="16" height="16"><path d="M6 1 A2 2 0 1 1 6.1 1Z" fill="#f90"/><circle cx="6" cy="3" r="2.5" fill="#f90"/><path d="M6 6 L3 10 L1 15 M6 6 L9 10 L12 14 M6 7 L11 7" stroke="#f90" stroke-width="2.5" fill="none"/><rect x="9" y="1" width="6" height="7" fill="#fff" stroke="#000"/></svg>
<div class="a t" style="left:520px;top:1004px;font-size:11px;letter-spacing:-0.1px;">Kado Lusikka&#x27;s...</div>
<div class="a " style="left:607px;top:997px;width:108px;height:23px;background:#d4d0c8;border-top:1px solid #fff;border-left:1px solid #fff;border-right:1px solid #404040;border-bottom:1px solid #404040;box-shadow:inset -1px -1px 0 #808080;"></div>
<svg class="a" style="left:612px;top:1001px" width="16" height="16"><path d="M4 2 H13 Q15 2 15 5 V8 Q15 10 13 10 H8 L5 13 V10 H4 Q2 10 2 8 V5 Q2 2 4 2Z" fill="#fff" stroke="#000"/><path d="M1 12 L6 15 L10 14" stroke="#e55" stroke-width="2.5" fill="none"/></svg>
<div class="a t" style="left:631px;top:1004px;font-size:11px;letter-spacing:-0.1px;">Runner609 : ...</div>
<div class="a " style="left:718px;top:997px;width:107px;height:23px;background:#d4d0c8;border-top:1px solid #fff;border-left:1px solid #fff;border-right:1px solid #404040;border-bottom:1px solid #404040;box-shadow:inset -1px -1px 0 #808080;"></div>
<svg class="a" style="left:723px;top:1001px" width="16" height="16"><circle cx="8" cy="3" r="2.5" fill="#f90"/><path d="M8 6 L5 10 L2 15 M8 6 L11 10 L14 14 M8 7 L13 7" stroke="#f90" stroke-width="2.5" fill="none"/></svg>
<div class="a t" style="left:742px;top:1004px;font-size:11px;letter-spacing:-0.1px;">Kado Lusikka -...</div>
<div class="a " style="left:829px;top:997px;width:108px;height:23px;background:#d4d0c8;border-top:1px solid #fff;border-left:1px solid #fff;border-right:1px solid #404040;border-bottom:1px solid #404040;box-shadow:inset -1px -1px 0 #808080;"></div>
<svg class="a" style="left:834px;top:1001px" width="16" height="16"><rect x="1" y="8" width="14" height="7" fill="#ee9" stroke="#444"/><path d="M4 8 L8 2 L12 5" stroke="#4bd" stroke-width="2" fill="none"/></svg>
<div class="a t" style="left:853px;top:1004px;font-size:11px;letter-spacing:-0.1px;">Dev-C++</div>
<div class="a " style="left:940px;top:997px;width:108px;height:23px;background-color:#ece9e2;background-image:repeating-conic-gradient(#d4d0c8 0 25%,#fff 0 50%);background-size:2px 2px;border-top:1px solid #404040;border-left:1px solid #404040;border-right:1px solid #fff;border-bottom:1px solid #fff;box-shadow:inset 1px 1px 0 #808080;"></div>
<svg class="a" style="left:945px;top:1001px" width="16" height="16"><rect x="0" y="1" width="16" height="14" fill="#000"/><rect x="0" y="1" width="16" height="2" fill="#aab"/><text x="1" y="12" font-family="Liberation Sans" font-size="7" font-weight="bold" fill="#fff">C:\</text></svg>
<div class="a t" style="left:964px;top:1004px;font-size:11px;font-weight:bold;letter-spacing:0.2px;">C:\Documen...</div>
<div class="a " style="left:1058px;top:999px;width:2px;height:20px;border-left:1px solid #808080;border-right:1px solid #fff;"></div>
<div class="a " style="left:1066px;top:997px;width:1px;height:24px;background:#808080"></div>
<div class="a " style="left:1067px;top:997px;width:1px;height:24px;background:#fff"></div>
<svg class="a" style="left:1073px;top:1001px" width="12" height="16"><rect x="3.5" y="0.5" width="6" height="4" fill="none" stroke="#000"/><rect x="1.5" y="3.5" width="6" height="4" fill="#d4d0c8" stroke="#000"/><path d="M3 11 L9 11 L6 14Z" fill="#000"/></svg>
<div class="a " style="left:1111px;top:997px;width:167px;height:24px;border-top:1px solid #808080;border-left:1px solid #808080;border-right:1px solid #fff;border-bottom:1px solid #fff;"></div>
<div class="a t" style="left:1115px;top:1002px;font-size:14px;font-weight:bold;">«</div>
<svg class="a" style="left:1128px;top:1001px" width="92" height="18" viewBox="0 0 92 18"><circle cx="7" cy="4" r="3.5" fill="#4a9ac8"/><path d="M1 17 Q3 9 7 8 Q11 9 13 17Z" fill="#3aa8a0"/><rect x="11" y="9" width="5" height="6" fill="#f06040"/><circle cx="27" cy="8" r="8" fill="#3a78c8"/><circle cx="28" cy="4" r="2.5" fill="#f8c860"/><path d="M28 6 L25 12 L30 16 M28 8 L33 12" stroke="#222" stroke-width="2" fill="none"/><rect x="19.5" y="6.5" width="8" height="9" fill="#f0f040" stroke="#222"/><path d="M21 9 H26 M21 11 H26 M21 13 H26" stroke="#222"/><path d="M39 5 L45 1 L45 4 L52 4 L52 11 L46 17 L46 13 L39 13Z" fill="#888" stroke="#222" stroke-width="1"/><rect x="43.5" y="6.5" width="4" height="6" fill="#fff" stroke="#000"/><circle cx="62" cy="8" r="6.5" fill="#8a8a98" stroke="#444" stroke-width="0.8"/><circle cx="61" cy="7" r="3" fill="#c8c8d0"/><path d="M65 14 L69 17 M67 12 L70 15" stroke="#88c" stroke-width="0.8"/><path d="M73 4 Q82 2 90 4 L89 13 Q80 15 73 13Z" fill="#e02020"/><text x="74.5" y="12" font-family="Liberation Sans" font-size="9" font-weight="bold" font-style="italic" fill="#fff">ATI</text></svg>
<div class="a t" style="left:1226px;top:1004px;font-size:11px;">1:55 PM</div>
</body></html>
